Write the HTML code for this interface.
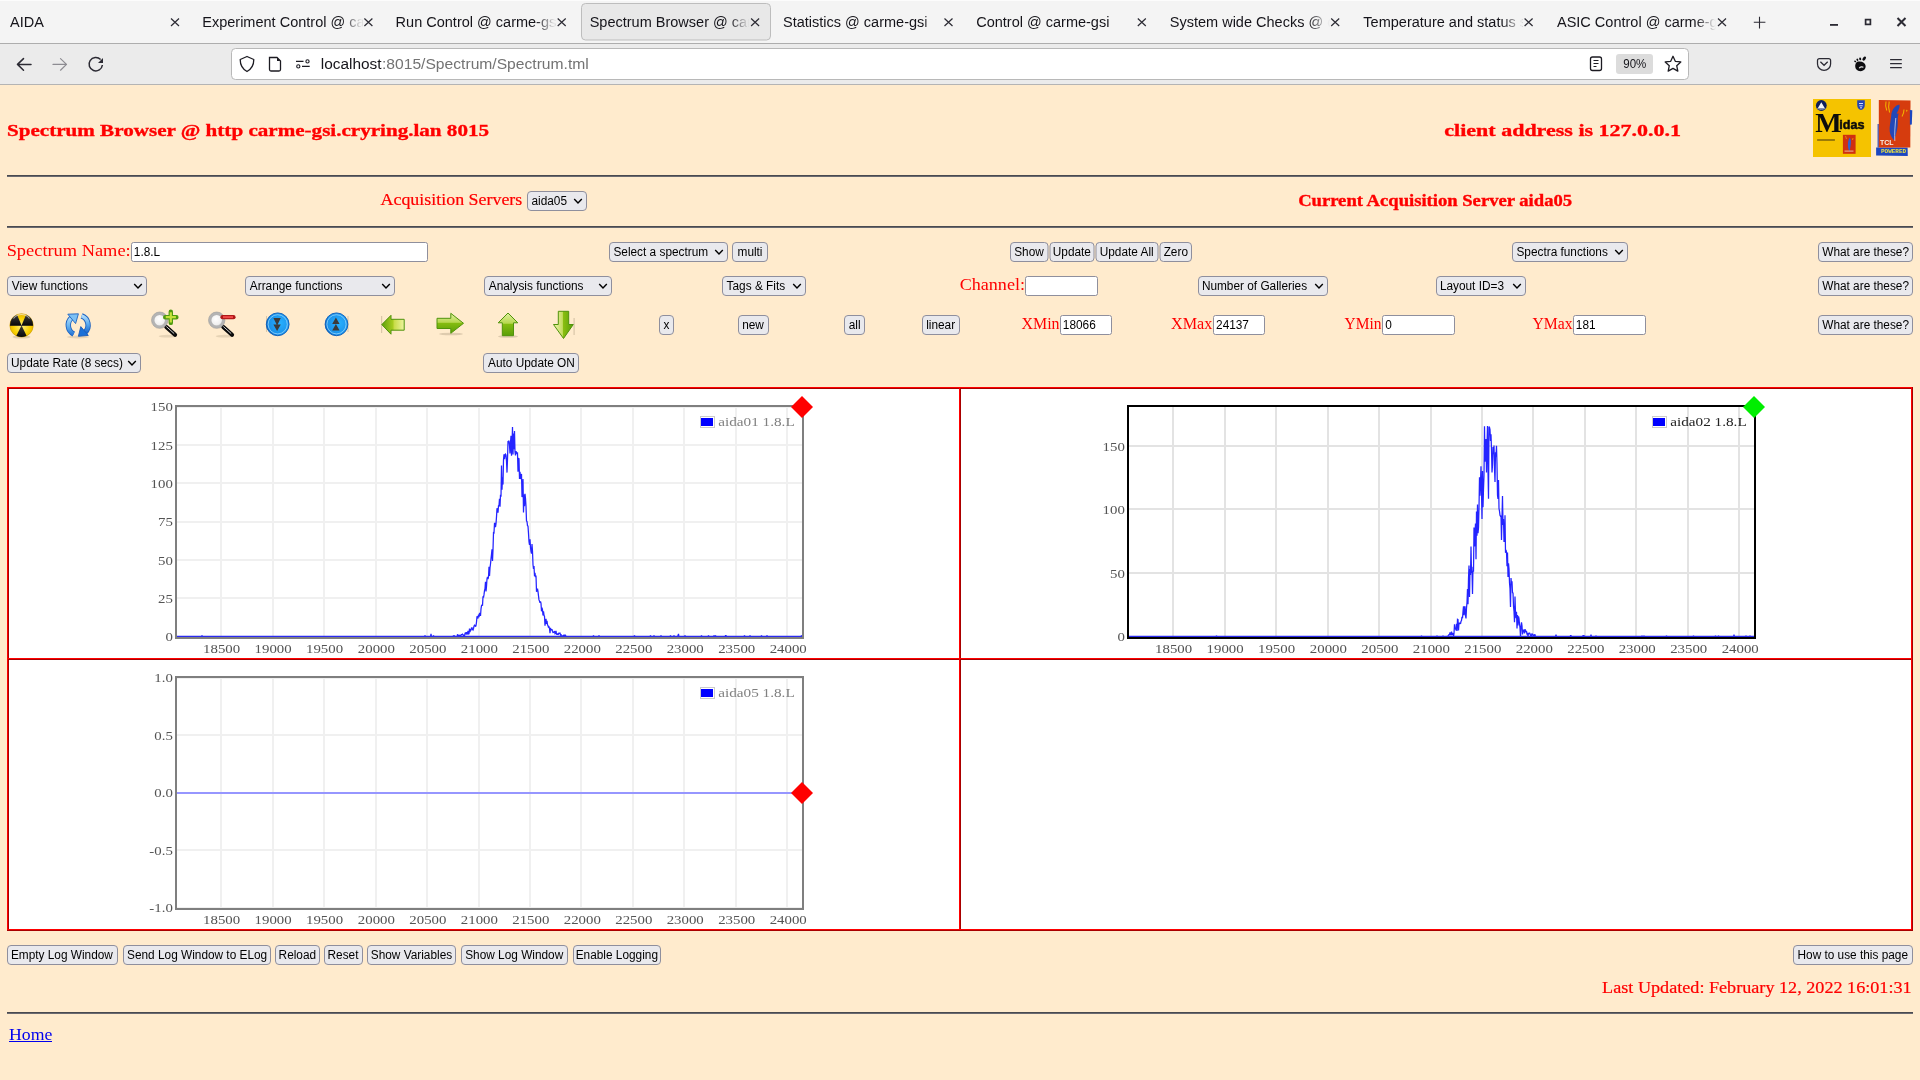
<!DOCTYPE html>
<html><head><meta charset="utf-8"><title>Spectrum Browser @ carme-gsi</title>
<style>html,body{margin:0;padding:0;width:1920px;height:1080px;overflow:hidden;background:#ffebcd;font-family:"Liberation Sans",sans-serif}</style>
</head><body>
<svg width="1920" height="1080" viewBox="0 0 1920 1080" style="position:absolute;left:0;top:0;will-change:transform">
<defs>
<radialGradient id="nukeg" cx="0.5" cy="0.55" r="0.6"><stop offset="0" stop-color="#fff080"/><stop offset="0.6" stop-color="#f8d000"/><stop offset="1" stop-color="#e0a800"/></radialGradient>
<linearGradient id="blueg" x1="0" y1="0" x2="0" y2="1"><stop offset="0" stop-color="#8fd0ff"/><stop offset="1" stop-color="#1a6fd0"/></linearGradient>
<radialGradient id="bcirc" cx="0.6" cy="0.45" r="0.6"><stop offset="0" stop-color="#28b0ff"/><stop offset="0.85" stop-color="#1a90e8"/><stop offset="1" stop-color="#0c64c0"/></radialGradient>
<linearGradient id="greeng" x1="0" y1="0" x2="0" y2="1"><stop offset="0" stop-color="#d8ee80"/><stop offset="1" stop-color="#5a9a10"/></linearGradient>
<linearGradient id="greengh" x1="0" y1="0" x2="1" y2="0"><stop offset="0" stop-color="#6aa818"/><stop offset="1" stop-color="#d0ea78"/></linearGradient>
<linearGradient id="nukeb" x1="0" y1="0" x2="0" y2="1"><stop offset="0" stop-color="#3a3a3a"/><stop offset="1" stop-color="#080808"/></linearGradient>
<linearGradient id="refl" x1="0" y1="0" x2="0" y2="1"><stop offset="0" stop-color="#a8d8fa"/><stop offset="0.5" stop-color="#68b4f0"/><stop offset="1" stop-color="#2a7ad8"/></linearGradient>
<linearGradient id="refr" x1="0" y1="0" x2="0" y2="1"><stop offset="0" stop-color="#b0dcfa"/><stop offset="0.5" stop-color="#5aaaf0"/><stop offset="1" stop-color="#1a6ad0"/></linearGradient>
<linearGradient id="gl" x1="0" y1="0" x2="1" y2="0"><stop offset="0" stop-color="#5fa00a"/><stop offset="0.5" stop-color="#a8cc20"/><stop offset="0.55" stop-color="#c8dc48"/><stop offset="1" stop-color="#eef4a0"/></linearGradient>
<linearGradient id="gv" x1="0" y1="0" x2="0" y2="1"><stop offset="0" stop-color="#e0f0a0"/><stop offset="0.45" stop-color="#b8d850"/><stop offset="0.5" stop-color="#84bc10"/><stop offset="1" stop-color="#5a9e08"/></linearGradient>
<linearGradient id="gd" x1="0" y1="0" x2="1" y2="0"><stop offset="0" stop-color="#f0f4b0"/><stop offset="0.45" stop-color="#c4dc60"/><stop offset="0.5" stop-color="#88be10"/><stop offset="1" stop-color="#5a9e08"/></linearGradient>
<radialGradient id="lens" cx="0.45" cy="0.4" r="0.6"><stop offset="0" stop-color="#ffffff"/><stop offset="0.7" stop-color="#f0f0f0"/><stop offset="1" stop-color="#d0d0d0"/></radialGradient>
<linearGradient id="fadeT" x1="0" y1="0" x2="1" y2="0"><stop offset="0" stop-color="#f4f4f4" stop-opacity="0"/><stop offset="1" stop-color="#f4f4f4" stop-opacity="1"/></linearGradient>
<linearGradient id="fadeA" x1="0" y1="0" x2="1" y2="0"><stop offset="0" stop-color="#e8e8e8" stop-opacity="0"/><stop offset="1" stop-color="#e8e8e8" stop-opacity="1"/></linearGradient>
<clipPath id="tclip0" clipPathUnits="userSpaceOnUse"><rect x="7.0" y="0" width="162.0" height="43"/></clipPath><clipPath id="tclip1" clipPathUnits="userSpaceOnUse"><rect x="200.4" y="0" width="162.0" height="43"/></clipPath><clipPath id="tclip2" clipPathUnits="userSpaceOnUse"><rect x="393.7" y="0" width="162.0" height="43"/></clipPath><clipPath id="tclip3" clipPathUnits="userSpaceOnUse"><rect x="587.1" y="0" width="162.0" height="43"/></clipPath><clipPath id="tclip4" clipPathUnits="userSpaceOnUse"><rect x="780.5" y="0" width="162.0" height="43"/></clipPath><clipPath id="tclip5" clipPathUnits="userSpaceOnUse"><rect x="973.9" y="0" width="162.0" height="43"/></clipPath><clipPath id="tclip6" clipPathUnits="userSpaceOnUse"><rect x="1167.2" y="0" width="162.0" height="43"/></clipPath><clipPath id="tclip7" clipPathUnits="userSpaceOnUse"><rect x="1360.6" y="0" width="162.0" height="43"/></clipPath><clipPath id="tclip8" clipPathUnits="userSpaceOnUse"><rect x="1554.0" y="0" width="162.0" height="43"/></clipPath></defs>
<rect x="0" y="0" width="1920" height="43" fill="#f4f4f4"/>
<rect x="0" y="0" width="1920" height="1" fill="#fcfcfc"/><rect x="0" y="43" width="1920" height="1" fill="#adadad"/>
<rect x="0" y="44" width="1920" height="40" fill="#ebebeb"/>
<rect x="0" y="84" width="1920" height="1" fill="#b4b4b4"/>
<rect x="581.5" y="3.5" width="189" height="36.5" rx="4" fill="#e8e8e8" stroke="#bdbdbd" stroke-width="1"/>
<path d="M17.5,64.4 H31 M17.5,64.4 L23.5,58.6 M17.5,64.4 L23.5,70.2" stroke="#2b2a33" stroke-width="1.5" fill="none" stroke-linecap="round"/>
<path d="M53,64.4 H66.5 M66.5,64.4 L60.5,58.6 M66.5,64.4 L60.5,70.2" stroke="#8d8c92" stroke-width="1.2" fill="none" stroke-linecap="round"/>
<path d="M102.4,65 A6.7,6.7 0 1 1 100.6,59.6" stroke="#2b2a33" stroke-width="1.5" fill="none"/><path d="M103,58 L103,63 L98,63 Z" fill="#2b2a33"/>
<rect x="231.5" y="48.5" width="1457" height="31" rx="4" fill="#ffffff" stroke="#b8b8b8" stroke-width="1"/>
<path d="M247,56.5 L253.8,59.5 C253.8,65 251.5,69 247,71.5 C242.5,69 240.2,65 240.2,59.5 Z" fill="none" stroke="#1c1b22" stroke-width="1.3" stroke-linejoin="round"/>
<path d="M269.5,57.5 H277 L280.5,61 V69.5 A1.5,1.5 0 0 1 279,71 H271 A1.5,1.5 0 0 1 269.5,69.5 Z" fill="none" stroke="#1c1b22" stroke-width="1.3"/><path d="M277,57.5 L280.5,61 H277 Z" fill="#1c1b22"/>
<path d="M296,61.4 H303.5 M302,66.4 H309.7" stroke="#1c1b22" stroke-width="1.2"/><circle cx="307.5" cy="61.4" r="1.6" fill="none" stroke="#1c1b22" stroke-width="1.1"/><circle cx="298.3" cy="66.4" r="1.6" fill="none" stroke="#1c1b22" stroke-width="1.1"/>
<rect x="1590.5" y="57" width="11" height="13.5" rx="2" fill="none" stroke="#1c1b22" stroke-width="1.3"/><path d="M1593.5,60.5 H1598.5 M1593.5,63.5 H1598.5 M1593.5,66.5 H1596.5" stroke="#1c1b22" stroke-width="1.1"/>
<rect x="1616" y="54" width="37" height="20" rx="3" fill="#dcdcdc"/>
<polygon points="1673.00,56.30 1675.29,61.34 1680.80,61.97 1676.71,65.71 1677.82,71.13 1673.00,68.40 1668.18,71.13 1669.29,65.71 1665.20,61.97 1670.71,61.34" fill="none" stroke="#1c1b22" stroke-width="1.3" stroke-linejoin="round"/>
<path d="M1819.5,58.6 H1828.6 A2,2 0 0 1 1830.6,60.6 V63.9 A6.55,6.55 0 0 1 1817.5,63.9 V60.6 A2,2 0 0 1 1819.5,58.6 Z" fill="none" stroke="#2b2a33" stroke-width="1.25"/><path d="M1820.4,61.8 L1824.05,65.3 L1827.7,61.8" fill="none" stroke="#2b2a33" stroke-width="1.25"/>
<g fill="#0c0c10"><path d="M1858.5,61.6 C1862.5,61.2 1865.2,63.2 1865.6,65.8 C1865.9,67.6 1865,69.6 1863,70.6 C1860.8,71.6 1857.8,71.2 1856.2,69.2 C1854.5,67 1854.9,62 1858.5,61.6 Z"/><ellipse cx="1855.2" cy="61.4" rx="1.1" ry="0.8" transform="rotate(35 1855.2 61.4)"/><ellipse cx="1857.4" cy="59.7" rx="1.2" ry="0.9" transform="rotate(60 1857.4 59.7)"/><ellipse cx="1860.2" cy="58.9" rx="1.4" ry="1.0" transform="rotate(75 1860.2 58.9)"/><ellipse cx="1864.2" cy="58.6" rx="2.3" ry="1.4" transform="rotate(-50 1864.2 58.6)"/></g><path d="M1859.3,68.3 C1860.2,66.6 1862.4,66.4 1863.4,67.4" fill="none" stroke="#ebebeb" stroke-width="1.3"/>
<path d="M1890.1,59.6 H1901.8 M1890.1,63.6 H1901.8 M1890.1,67.6 H1901.8" stroke="#2b2a33" stroke-width="1.3"/>
<rect x="0" y="85" width="1920" height="995" fill="#ffebcd"/>
<rect x="7" y="175" width="1906" height="1" fill="#4a4a4f"/><rect x="7" y="176" width="1906" height="1" fill="#6a6a70"/>
<rect x="7" y="226" width="1906" height="1" fill="#4a4a4f"/><rect x="7" y="227" width="1906" height="1" fill="#6a6a70"/>
<rect x="7" y="1012" width="1906" height="1" fill="#4a4a4f"/><rect x="7" y="1013" width="1906" height="1" fill="#6a6a70"/>
<rect x="9" y="1041" width="43" height="1" fill="#0000ee"/>
<rect x="1813" y="99" width="58" height="58" fill="#f5c300"/>
<circle cx="1821.3" cy="105.5" r="5.4" fill="#0e1e5c"/><path d="M1817.6,108.4 L1821.3,102.3 L1825,108.4 Z" fill="#f4f4f4"/><path d="M1817.2,108.6 Q1821.3,110.6 1825.4,108.6" stroke="#9aa8c0" stroke-width="0.8" fill="none"/>
<path d="M1857.2,100.2 H1864.8 V105 C1864.8,107.8 1863,109.6 1861,110 C1859,109.6 1857.2,107.8 1857.2,105 Z" fill="#2444b4"/><path d="M1859,103.5 H1863 M1859.3,105.8 H1862.7 M1860,107.8 H1862" stroke="#e8ecff" stroke-width="0.9"/>
<text transform="translate(1815.2,131.9) scale(1.02,1)" font-family="'Liberation Serif'" font-weight="bold" font-size="27.5" fill="#0c0c0c">M</text>
<text transform="translate(1839.2,128.9) scale(1.0,1)" font-family="'Liberation Sans'" font-weight="bold" font-size="12.6" fill="#0c0c0c" stroke="#0c0c0c" stroke-width="0.5">idas</text>
<rect x="1817.1" y="139.2" width="17.8" height="1.6" fill="#2a2010" opacity="0.55"/>
<rect x="1842.9" y="134.8" width="12.7" height="19" fill="#d03010"/><path d="M1849.8,137.5 C1848,139.5 1847.5,144 1848.2,148 C1848.6,150 1849.3,151 1849.5,151.5 C1850.3,148 1851.3,143 1850.8,140 Z" fill="#3060d0"/><rect x="1844.5" y="150.5" width="9" height="1.2" fill="#f0c0a0" opacity="0.8"/><path d="M1845.5,136 L1846.5,139 M1853,138 L1852.5,140" stroke="#e8b000" stroke-width="0.7"/>
<path d="M1877.6,124 L1878.8,124 L1878.8,147.6 L1877.6,147.6 Z" fill="#1b46c0"/>
<path d="M1876.1,147.6 L1907.6,147.6 L1907.8,156 L1876.1,155.4 Z" fill="#1b46c0"/>
<path d="M1878.8,100.1 L1910.5,100.6 L1910.3,147.6 L1878.8,147.6 Z" fill="#d63c0e"/>
<path d="M1909.9,110 L1912.3,110.3 L1911.8,124.4 L1909.9,124.8 Z" fill="#1b46c0"/>
<path d="M1899.5,104.6 C1895.5,105.2 1891.6,109.5 1891.2,116 C1890.8,121 1889.2,126.5 1889.7,131.5 C1890.2,135.5 1892.8,139 1894.4,140.6 C1895.2,136 1897.2,131 1897.6,126 C1898,121.5 1897.2,118.2 1898.6,113.4 L1896.6,113.8 C1898.2,110.5 1900.2,107.5 1899.5,104.6 Z" fill="#2248b8"/>
<path d="M1895.8,118 C1895,126 1894.4,134 1894.8,141" stroke="#e8e8f0" stroke-width="0.7" fill="none"/>
<path d="M1886,101.5 C1885.3,104.5 1885.6,107.5 1886.8,110.5 M1889.2,101.5 C1888.3,105 1888.6,109 1889.6,112.5" stroke="#f0b000" stroke-width="1.1" fill="none"/>
<path d="M1904,109.5 C1904,112 1903.2,114.5 1902,116.5 M1907,109.8 L1906.5,111.5" stroke="#f0b000" stroke-width="1.1" fill="none"/>
<text transform="translate(1880,145.3) scale(1.05,1)" font-family="'Liberation Sans'" font-weight="bold" font-size="6.6" fill="#f8f0e8">TCL</text>
<text x="1881" y="153.3" font-family="'Liberation Mono'" font-weight="bold" font-size="6" fill="#e8e040" textLength="25.1" lengthAdjust="spacingAndGlyphs">POWERED</text>
<rect x="527.5" y="191.5" width="59.0" height="19" rx="3.5" fill="#e9e9ed" stroke="#8f8f9d" stroke-width="1"/>
<path d="M574.2,199.0 L578.0,203.0 L581.8,199.0" fill="none" stroke="#000" stroke-width="1.4"/>
<rect x="131.5" y="242.5" width="296.0" height="19" rx="2" fill="#ffffff" stroke="#8f8f9d" stroke-width="1"/>
<rect x="609.5" y="242.5" width="118.0" height="19" rx="3.5" fill="#e9e9ed" stroke="#8f8f9d" stroke-width="1"/>
<path d="M715.2,250.0 L719.0,254.0 L722.8,250.0" fill="none" stroke="#000" stroke-width="1.4"/>
<rect x="732.5" y="242.5" width="35.0" height="19" rx="3.5" fill="#e9e9ed" stroke="#8f8f9d" stroke-width="1"/>
<rect x="1010.5" y="242.5" width="37.5" height="19" rx="3.5" fill="#e9e9ed" stroke="#8f8f9d" stroke-width="1"/>
<rect x="1050.0" y="242.5" width="44.0" height="19" rx="3.5" fill="#e9e9ed" stroke="#8f8f9d" stroke-width="1"/>
<rect x="1096.0" y="242.5" width="62.0" height="19" rx="3.5" fill="#e9e9ed" stroke="#8f8f9d" stroke-width="1"/>
<rect x="1160.0" y="242.5" width="31.5" height="19" rx="3.5" fill="#e9e9ed" stroke="#8f8f9d" stroke-width="1"/>
<rect x="1512.5" y="242.5" width="115.0" height="19" rx="3.5" fill="#e9e9ed" stroke="#8f8f9d" stroke-width="1"/>
<path d="M1615.2,250.0 L1619.0,254.0 L1622.8,250.0" fill="none" stroke="#000" stroke-width="1.4"/>
<rect x="1818.5" y="242.5" width="94.0" height="19" rx="3.5" fill="#e9e9ed" stroke="#8f8f9d" stroke-width="1"/>
<rect x="7.5" y="276.5" width="139.0" height="19" rx="3.5" fill="#e9e9ed" stroke="#8f8f9d" stroke-width="1"/>
<path d="M134.2,284.0 L138.0,288.0 L141.8,284.0" fill="none" stroke="#000" stroke-width="1.4"/>
<rect x="245.5" y="276.5" width="149.0" height="19" rx="3.5" fill="#e9e9ed" stroke="#8f8f9d" stroke-width="1"/>
<path d="M382.2,284.0 L386.0,288.0 L389.8,284.0" fill="none" stroke="#000" stroke-width="1.4"/>
<rect x="484.5" y="276.5" width="127.0" height="19" rx="3.5" fill="#e9e9ed" stroke="#8f8f9d" stroke-width="1"/>
<path d="M599.2,284.0 L603.0,288.0 L606.8,284.0" fill="none" stroke="#000" stroke-width="1.4"/>
<rect x="722.5" y="276.5" width="83.0" height="19" rx="3.5" fill="#e9e9ed" stroke="#8f8f9d" stroke-width="1"/>
<path d="M793.2,284.0 L797.0,288.0 L800.8,284.0" fill="none" stroke="#000" stroke-width="1.4"/>
<rect x="1025.5" y="276.5" width="72.0" height="19" rx="2" fill="#ffffff" stroke="#8f8f9d" stroke-width="1"/>
<rect x="1198.5" y="276.5" width="129.0" height="19" rx="3.5" fill="#e9e9ed" stroke="#8f8f9d" stroke-width="1"/>
<path d="M1315.2,284.0 L1319.0,288.0 L1322.8,284.0" fill="none" stroke="#000" stroke-width="1.4"/>
<rect x="1436.5" y="276.5" width="89.0" height="19" rx="3.5" fill="#e9e9ed" stroke="#8f8f9d" stroke-width="1"/>
<path d="M1513.2,284.0 L1517.0,288.0 L1520.8,284.0" fill="none" stroke="#000" stroke-width="1.4"/>
<rect x="1818.5" y="276.5" width="94.0" height="19" rx="3.5" fill="#e9e9ed" stroke="#8f8f9d" stroke-width="1"/>
<rect x="659.5" y="315.5" width="14.0" height="19" rx="3.5" fill="#e9e9ed" stroke="#8f8f9d" stroke-width="1"/>
<rect x="738.5" y="315.5" width="30.0" height="19" rx="3.5" fill="#e9e9ed" stroke="#8f8f9d" stroke-width="1"/>
<rect x="844.5" y="315.5" width="20.0" height="19" rx="3.5" fill="#e9e9ed" stroke="#8f8f9d" stroke-width="1"/>
<rect x="922.5" y="315.5" width="37.0" height="19" rx="3.5" fill="#e9e9ed" stroke="#8f8f9d" stroke-width="1"/>
<rect x="1060.5" y="315.5" width="51.0" height="19" rx="2" fill="#ffffff" stroke="#8f8f9d" stroke-width="1"/>
<rect x="1213.5" y="315.5" width="51.0" height="19" rx="2" fill="#ffffff" stroke="#8f8f9d" stroke-width="1"/>
<rect x="1382.5" y="315.5" width="72.0" height="19" rx="2" fill="#ffffff" stroke="#8f8f9d" stroke-width="1"/>
<rect x="1573.5" y="315.5" width="72.0" height="19" rx="2" fill="#ffffff" stroke="#8f8f9d" stroke-width="1"/>
<rect x="1818.5" y="315.5" width="94.0" height="19" rx="3.5" fill="#e9e9ed" stroke="#8f8f9d" stroke-width="1"/>
<rect x="7.5" y="353.5" width="133.0" height="19" rx="3.5" fill="#e9e9ed" stroke="#8f8f9d" stroke-width="1"/>
<path d="M128.2,361.0 L132.0,365.0 L135.8,361.0" fill="none" stroke="#000" stroke-width="1.4"/>
<rect x="483.5" y="353.5" width="95.0" height="19" rx="3.5" fill="#e9e9ed" stroke="#8f8f9d" stroke-width="1"/>
<rect x="7.5" y="945.5" width="110.0" height="19" rx="3.5" fill="#e9e9ed" stroke="#8f8f9d" stroke-width="1"/>
<rect x="123.5" y="945.5" width="147.0" height="19" rx="3.5" fill="#e9e9ed" stroke="#8f8f9d" stroke-width="1"/>
<rect x="275.5" y="945.5" width="44.0" height="19" rx="3.5" fill="#e9e9ed" stroke="#8f8f9d" stroke-width="1"/>
<rect x="324.5" y="945.5" width="38.0" height="19" rx="3.5" fill="#e9e9ed" stroke="#8f8f9d" stroke-width="1"/>
<rect x="367.5" y="945.5" width="88.0" height="19" rx="3.5" fill="#e9e9ed" stroke="#8f8f9d" stroke-width="1"/>
<rect x="461.5" y="945.5" width="106.0" height="19" rx="3.5" fill="#e9e9ed" stroke="#8f8f9d" stroke-width="1"/>
<rect x="573.5" y="945.5" width="87.0" height="19" rx="3.5" fill="#e9e9ed" stroke="#8f8f9d" stroke-width="1"/>
<rect x="1793.5" y="945.5" width="119.0" height="19" rx="3.5" fill="#e9e9ed" stroke="#8f8f9d" stroke-width="1"/>
<ellipse cx="21.5" cy="337" rx="9" ry="1.6" fill="#5a4a30" opacity="0.18"/>
<circle cx="21.55" cy="325.4" r="11.7" fill="url(#nukeg)" stroke="#c89a00" stroke-width="0.6"/>
<path d="M21.55,325.4 L10.05,325.40 A11.5,11.5 0 0 1 17.06,314.81 Z" fill="url(#nukeb)"/>
<path d="M21.55,325.4 L26.04,314.81 A11.5,11.5 0 0 1 33.05,325.40 Z" fill="url(#nukeb)"/>
<path d="M21.55,325.4 L26.59,335.74 A11.5,11.5 0 0 1 16.33,335.65 Z" fill="url(#nukeb)"/>
<rect x="10" y="325" width="23" height="0.8" fill="#0a0a20" opacity="0.7"/>
<path d="M13.5,318.5 A10,10 0 0 1 29.5,318.5" fill="none" stroke="#ffffff" stroke-width="1.2" opacity="0.55"/>
<ellipse cx="78" cy="337" rx="11" ry="1.5" fill="#5a4a30" opacity="0.15"/>
<path d="M73.71,334.02 A9.9,9.9 0 0 1 71.58,317.84" fill="none" stroke="#1d62c0" stroke-width="5.4"/>
<path d="M73.71,334.02 A9.9,9.9 0 0 1 71.58,317.84" fill="none" stroke="url(#refl)" stroke-width="3.6"/>
<path d="M67.8,314.2 L78.4,313.8 L75.6,323.6 Z" fill="#7cc0f4" stroke="#1d62c0" stroke-width="0.9" stroke-linejoin="round"/>
<path d="M81.59,315.90 A9.9,9.9 0 0 1 84.95,332.44" fill="none" stroke="#1d62c0" stroke-width="5.4"/>
<path d="M81.59,315.90 A9.9,9.9 0 0 1 84.95,332.44" fill="none" stroke="url(#refr)" stroke-width="3.6"/>
<path d="M80.8,326.6 L78.4,336.3 L88.3,335.4 Z" fill="#1a70d8" stroke="#1d5cb8" stroke-width="0.9" stroke-linejoin="round"/>
<ellipse cx="167.7" cy="336.2" rx="9" ry="1.4" fill="#5a4a30" opacity="0.15"/><path d="M166.3,327.0 L175.0,334.8" stroke="#0a0a0a" stroke-width="4.2" stroke-linecap="round"/><path d="M166.3,326.5 L174.2,333.6" stroke="#e8e8e8" stroke-width="0.9"/><circle cx="159.7" cy="320.2" r="6.7" fill="url(#lens)" stroke="#b4b4b4" stroke-width="2.9"/><circle cx="159.7" cy="320.2" r="8.2" fill="none" stroke="#9a9a9a" stroke-width="0.6"/>
<path d="M170.8,311.8 V322.9 M165.2,317.2 H176.4" stroke="#4e9a0e" stroke-width="4.4" stroke-linecap="round"/>
<path d="M170.8,312.3 V322.4 M165.7,317.2 H175.9" stroke="#c4e03c" stroke-width="2.2"/>
<ellipse cx="224.7" cy="336.2" rx="9" ry="1.4" fill="#5a4a30" opacity="0.15"/><path d="M223.3,327.0 L232.0,334.8" stroke="#0a0a0a" stroke-width="4.2" stroke-linecap="round"/><path d="M223.3,326.5 L231.2,333.6" stroke="#e8e8e8" stroke-width="0.9"/><circle cx="216.7" cy="320.2" r="6.7" fill="url(#lens)" stroke="#b4b4b4" stroke-width="2.9"/><circle cx="216.7" cy="320.2" r="8.2" fill="none" stroke="#9a9a9a" stroke-width="0.6"/>
<path d="M222.5,317.2 H233.5" stroke="#b01818" stroke-width="4.2" stroke-linecap="round"/><path d="M223,317.1 H233" stroke="#f04848" stroke-width="2"/>
<rect x="266" y="316" width="1" height="16" fill="#6a5a40" opacity="0.25"/><rect x="347.5" y="316" width="1" height="16" fill="#6a5a40" opacity="0.25"/>
<circle cx="277.7" cy="324.3" r="11.4" fill="url(#bcirc)" stroke="#0c5cb8" stroke-width="0.9"/><circle cx="277.7" cy="324.3" r="9.6" fill="none" stroke="#a8e0ff" stroke-width="0.9" opacity="0.75"/><path d="M273.4,318.1 L277.09999999999997,325.5 L280.79999999999995,318.1 Z M273.4,324.6 L277.09999999999997,331.1 L280.79999999999995,324.6 Z" fill="#3c3a3a"/>
<circle cx="336.5" cy="324.3" r="11.4" fill="url(#bcirc)" stroke="#0c5cb8" stroke-width="0.9"/><circle cx="336.5" cy="324.3" r="9.6" fill="none" stroke="#a8e0ff" stroke-width="0.9" opacity="0.75"/><path d="M332.2,324.1 L335.9,317.5 L339.59999999999997,324.1 Z M332.2,330.6 L335.9,324.0 L339.59999999999997,330.6 Z" fill="#3c3a3a"/>
<rect x="381" y="316" width="1.2" height="17" fill="#6a5a40" opacity="0.25"/><rect x="573.5" y="318" width="1.2" height="17" fill="#6a5a40" opacity="0.25"/>
<ellipse cx="451" cy="334" rx="12" ry="1.3" fill="#5a4a30" opacity="0.2"/><ellipse cx="508" cy="336.5" rx="10" ry="1.3" fill="#5a4a30" opacity="0.2"/>
<path d="M381.8,324.6 L391,315.3 V319.3 H404.2 V330.2 H391 V334.2 Z" fill="url(#gl)" stroke="#4f930c" stroke-width="1" stroke-linejoin="round"/>
<path d="M463.5,323.3 L450.8,313.3 V318.3 H437 V328.5 H450.8 V333.3 Z" fill="url(#gv)" stroke="#4f930c" stroke-width="1" stroke-linejoin="round"/>
<path d="M508,313 L517.8,322.8 H513.5 V335.7 H502.3 V322.8 H498.2 Z" fill="url(#gv)" stroke="#4f930c" stroke-width="1" stroke-linejoin="round"/>
<path d="M563.5,338.5 L573.3,324.5 H568.7 V311.3 H558.3 V324.5 H553.5 Z" fill="url(#gd)" stroke="#4f930c" stroke-width="1" stroke-linejoin="round"/>
<rect x="7" y="387" width="1906" height="544" fill="#ffffff"/>
<rect x="7" y="387" width="1906" height="1" fill="#ff0000"/>
<rect x="7" y="387" width="1" height="544" fill="#ff0000"/>
<rect x="7" y="930" width="1906" height="1" fill="#a80000"/>
<rect x="1912" y="387" width="1" height="544" fill="#a80000"/>
<rect x="8" y="388" width="952" height="1" fill="#a80000"/>
<rect x="8" y="388" width="1" height="271" fill="#a80000"/>
<rect x="8" y="658" width="952" height="1" fill="#ff0000"/>
<rect x="959" y="388" width="1" height="271" fill="#ff0000"/>
<rect x="960" y="388" width="952" height="1" fill="#a80000"/>
<rect x="960" y="388" width="1" height="271" fill="#a80000"/>
<rect x="960" y="658" width="952" height="1" fill="#ff0000"/>
<rect x="1911" y="388" width="1" height="271" fill="#ff0000"/>
<rect x="8" y="659" width="952" height="1" fill="#a80000"/>
<rect x="8" y="659" width="1" height="271" fill="#a80000"/>
<rect x="8" y="929" width="952" height="1" fill="#ff0000"/>
<rect x="959" y="659" width="1" height="271" fill="#ff0000"/>
<rect x="960" y="659" width="952" height="1" fill="#a80000"/>
<rect x="960" y="659" width="1" height="271" fill="#a80000"/>
<rect x="960" y="929" width="952" height="1" fill="#ff0000"/>
<rect x="1911" y="659" width="1" height="271" fill="#ff0000"/>
<path d="M221,407 V637 M273,407 V637 M324,407 V637 M376,407 V637 M427,407 V637 M479,407 V637 M530,407 V637 M581,407 V637 M633,407 V637 M684,407 V637 M736,407 V637 M787,407 V637 M177,637 H802 M177,598 H802 M177,560 H802 M177,522 H802 M177,483 H802 M177,445 H802 M177,407 H802" stroke="#f0f0f0" stroke-width="2" fill="none"/>
<polyline points="177.00,637.0 177.50,637.0 178.00,637.0 178.50,637.0 179.00,637.0 179.50,637.0 180.00,637.0 180.50,637.0 181.00,637.0 181.50,637.0 182.00,637.0 182.50,637.0 183.00,637.0 183.50,637.0 184.00,637.0 184.50,637.0 185.00,637.0 185.50,637.0 186.00,637.0 186.50,637.0 187.00,637.0 187.50,637.0 188.00,637.0 188.50,637.0 189.00,637.0 189.50,637.0 190.00,637.0 190.50,637.0 191.00,637.0 191.50,637.0 192.00,637.0 192.50,637.0 193.00,637.0 193.50,637.0 194.00,637.0 194.50,637.0 195.00,637.0 195.50,637.0 196.00,637.0 196.50,637.0 197.00,637.0 197.50,637.0 198.00,637.0 198.50,637.0 199.00,637.0 199.50,637.0 200.00,637.0 200.50,637.0 201.00,637.0 201.50,637.0 202.00,635.5 202.50,637.0 203.00,637.0 203.50,637.0 204.00,637.0 204.50,637.0 205.00,637.0 205.50,637.0 206.00,637.0 206.50,637.0 207.00,637.0 207.50,637.0 208.00,637.0 208.50,637.0 209.00,637.0 209.50,637.0 210.00,637.0 210.50,637.0 211.00,637.0 211.50,637.0 212.00,637.0 212.50,637.0 213.00,637.0 213.50,637.0 214.00,637.0 214.50,637.0 215.00,637.0 215.50,637.0 216.00,637.0 216.50,637.0 217.00,637.0 217.50,637.0 218.00,637.0 218.50,637.0 219.00,637.0 219.50,637.0 220.00,637.0 220.50,637.0 221.00,637.0 221.50,637.0 222.00,637.0 222.50,637.0 223.00,637.0 223.50,637.0 224.00,637.0 224.50,637.0 225.00,637.0 225.50,637.0 226.00,637.0 226.50,637.0 227.00,637.0 227.50,637.0 228.00,637.0 228.50,637.0 229.00,637.0 229.50,637.0 230.00,637.0 230.50,637.0 231.00,637.0 231.50,637.0 232.00,637.0 232.50,637.0 233.00,637.0 233.50,637.0 234.00,637.0 234.50,637.0 235.00,637.0 235.50,637.0 236.00,637.0 236.50,637.0 237.00,637.0 237.50,637.0 238.00,637.0 238.50,637.0 239.00,637.0 239.50,637.0 240.00,637.0 240.50,637.0 241.00,637.0 241.50,637.0 242.00,637.0 242.50,637.0 243.00,637.0 243.50,637.0 244.00,637.0 244.50,637.0 245.00,637.0 245.50,637.0 246.00,637.0 246.50,637.0 247.00,637.0 247.50,637.0 248.00,637.0 248.50,637.0 249.00,637.0 249.50,637.0 250.00,637.0 250.50,637.0 251.00,637.0 251.50,637.0 252.00,637.0 252.50,637.0 253.00,637.0 253.50,637.0 254.00,637.0 254.50,637.0 255.00,637.0 255.50,637.0 256.00,637.0 256.50,637.0 257.00,637.0 257.50,637.0 258.00,637.0 258.50,637.0 259.00,637.0 259.50,637.0 260.00,637.0 260.50,637.0 261.00,637.0 261.50,637.0 262.00,637.0 262.50,637.0 263.00,637.0 263.50,637.0 264.00,637.0 264.50,637.0 265.00,637.0 265.50,637.0 266.00,637.0 266.50,637.0 267.00,637.0 267.50,637.0 268.00,637.0 268.50,637.0 269.00,637.0 269.50,637.0 270.00,637.0 270.50,637.0 271.00,637.0 271.50,637.0 272.00,637.0 272.50,637.0 273.00,637.0 273.50,637.0 274.00,637.0 274.50,637.0 275.00,637.0 275.50,637.0 276.00,637.0 276.50,637.0 277.00,637.0 277.50,637.0 278.00,637.0 278.50,637.0 279.00,637.0 279.50,637.0 280.00,637.0 280.50,637.0 281.00,637.0 281.50,637.0 282.00,637.0 282.50,637.0 283.00,637.0 283.50,637.0 284.00,637.0 284.50,637.0 285.00,637.0 285.50,637.0 286.00,637.0 286.50,637.0 287.00,637.0 287.50,637.0 288.00,637.0 288.50,637.0 289.00,637.0 289.50,637.0 290.00,637.0 290.50,637.0 291.00,637.0 291.50,637.0 292.00,637.0 292.50,637.0 293.00,637.0 293.50,637.0 294.00,637.0 294.50,637.0 295.00,637.0 295.50,637.0 296.00,637.0 296.50,637.0 297.00,637.0 297.50,637.0 298.00,637.0 298.50,637.0 299.00,637.0 299.50,637.0 300.00,637.0 300.50,637.0 301.00,637.0 301.50,637.0 302.00,637.0 302.50,637.0 303.00,637.0 303.50,637.0 304.00,637.0 304.50,637.0 305.00,637.0 305.50,637.0 306.00,637.0 306.50,637.0 307.00,637.0 307.50,637.0 308.00,637.0 308.50,637.0 309.00,637.0 309.50,637.0 310.00,637.0 310.50,637.0 311.00,637.0 311.50,637.0 312.00,637.0 312.50,637.0 313.00,637.0 313.50,637.0 314.00,637.0 314.50,637.0 315.00,637.0 315.50,637.0 316.00,637.0 316.50,637.0 317.00,637.0 317.50,637.0 318.00,637.0 318.50,637.0 319.00,637.0 319.50,637.0 320.00,637.0 320.50,637.0 321.00,637.0 321.50,637.0 322.00,637.0 322.50,637.0 323.00,637.0 323.50,637.0 324.00,637.0 324.50,637.0 325.00,637.0 325.50,637.0 326.00,637.0 326.50,637.0 327.00,637.0 327.50,637.0 328.00,637.0 328.50,637.0 329.00,637.0 329.50,637.0 330.00,637.0 330.50,637.0 331.00,637.0 331.50,637.0 332.00,637.0 332.50,637.0 333.00,637.0 333.50,637.0 334.00,637.0 334.50,637.0 335.00,637.0 335.50,637.0 336.00,637.0 336.50,637.0 337.00,637.0 337.50,637.0 338.00,637.0 338.50,637.0 339.00,637.0 339.50,637.0 340.00,637.0 340.50,637.0 341.00,637.0 341.50,637.0 342.00,637.0 342.50,637.0 343.00,637.0 343.50,637.0 344.00,637.0 344.50,637.0 345.00,637.0 345.50,637.0 346.00,637.0 346.50,637.0 347.00,637.0 347.50,637.0 348.00,637.0 348.50,637.0 349.00,637.0 349.50,637.0 350.00,637.0 350.50,637.0 351.00,637.0 351.50,637.0 352.00,637.0 352.50,637.0 353.00,637.0 353.50,637.0 354.00,637.0 354.50,637.0 355.00,637.0 355.50,637.0 356.00,637.0 356.50,637.0 357.00,637.0 357.50,637.0 358.00,637.0 358.50,637.0 359.00,637.0 359.50,637.0 360.00,637.0 360.50,637.0 361.00,637.0 361.50,637.0 362.00,637.0 362.50,637.0 363.00,637.0 363.50,637.0 364.00,637.0 364.50,637.0 365.00,637.0 365.50,637.0 366.00,637.0 366.50,637.0 367.00,637.0 367.50,637.0 368.00,637.0 368.50,637.0 369.00,637.0 369.50,637.0 370.00,637.0 370.50,637.0 371.00,637.0 371.50,637.0 372.00,637.0 372.50,637.0 373.00,637.0 373.50,637.0 374.00,637.0 374.50,637.0 375.00,637.0 375.50,637.0 376.00,637.0 376.50,637.0 377.00,637.0 377.50,637.0 378.00,637.0 378.50,637.0 379.00,637.0 379.50,637.0 380.00,637.0 380.50,637.0 381.00,637.0 381.50,637.0 382.00,637.0 382.50,637.0 383.00,637.0 383.50,637.0 384.00,637.0 384.50,637.0 385.00,637.0 385.50,637.0 386.00,637.0 386.50,637.0 387.00,637.0 387.50,637.0 388.00,637.0 388.50,637.0 389.00,637.0 389.50,637.0 390.00,637.0 390.50,637.0 391.00,637.0 391.50,637.0 392.00,637.0 392.50,637.0 393.00,637.0 393.50,637.0 394.00,637.0 394.50,637.0 395.00,637.0 395.50,637.0 396.00,637.0 396.50,637.0 397.00,637.0 397.50,637.0 398.00,637.0 398.50,637.0 399.00,637.0 399.50,637.0 400.00,637.0 400.50,637.0 401.00,637.0 401.50,637.0 402.00,637.0 402.50,637.0 403.00,637.0 403.50,637.0 404.00,637.0 404.50,637.0 405.00,637.0 405.50,637.0 406.00,637.0 406.50,637.0 407.00,637.0 407.50,637.0 408.00,637.0 408.50,637.0 409.00,637.0 409.50,637.0 410.00,637.0 410.50,637.0 411.00,637.0 411.50,637.0 412.00,637.0 412.50,637.0 413.00,637.0 413.50,637.0 414.00,637.0 414.50,637.0 415.00,637.0 415.50,637.0 416.00,637.0 416.50,637.0 417.00,637.0 417.50,637.0 418.00,637.0 418.50,637.0 419.00,637.0 419.50,637.0 420.00,637.0 420.50,637.0 421.00,637.0 421.50,637.0 422.00,637.0 422.50,637.0 423.00,637.0 423.50,637.0 424.00,637.0 424.50,637.0 425.00,635.5 425.50,637.0 426.00,637.0 426.50,637.0 427.00,637.0 427.50,637.0 428.00,637.0 428.50,637.0 429.00,637.0 429.50,637.0 430.00,637.0 430.50,637.0 431.00,633.9 431.50,637.0 432.00,637.0 432.50,637.0 433.00,637.0 433.50,635.5 434.00,637.0 434.50,637.0 435.00,637.0 435.50,637.0 436.00,637.0 436.50,637.0 437.00,637.0 437.50,637.0 438.00,637.0 438.50,637.0 439.00,637.0 439.50,637.0 440.00,637.0 440.50,637.0 441.00,637.0 441.50,637.0 442.00,637.0 442.50,637.0 443.00,637.0 443.50,637.0 444.00,637.0 444.50,637.0 445.00,637.0 445.50,637.0 446.00,637.0 446.50,637.0 447.00,637.0 447.50,637.0 448.00,637.0 448.50,637.0 449.00,637.0 449.50,637.0 450.00,637.0 450.50,637.0 451.00,637.0 451.50,637.0 452.00,637.0 452.50,637.0 453.00,637.0 453.50,635.5 454.00,637.0 454.50,635.5 455.00,637.0 455.50,637.0 456.00,637.0 456.50,637.0 457.00,637.0 457.50,634.4 458.00,635.4 458.50,635.4 459.00,636.3 459.50,635.8 460.00,634.9 460.50,637.0 461.00,635.1 461.50,634.6 462.00,634.6 462.50,634.2 463.00,634.7 463.50,635.4 464.00,635.6 464.50,636.0 465.00,633.5 465.50,632.5 466.00,634.4 466.50,632.1 467.00,634.6 467.50,633.3 468.00,630.8 468.50,633.9 469.00,633.7 469.50,628.5 470.00,632.0 470.50,629.6 471.00,629.8 471.50,628.0 472.00,627.8 472.50,629.5 473.00,630.0 473.50,628.5 474.00,626.2 474.50,625.2 475.00,625.5 475.50,626.6 476.00,625.6 476.50,622.1 477.00,616.2 477.50,617.3 478.00,618.5 478.50,614.5 479.00,617.1 479.50,613.4 480.00,613.6 480.50,615.9 481.00,609.0 481.50,605.6 482.00,604.7 482.50,605.8 483.00,596.4 483.50,597.6 484.00,594.7 484.50,590.7 485.00,588.6 485.50,581.8 486.00,591.4 486.50,586.5 487.00,578.8 487.50,576.9 488.00,579.0 488.50,577.0 489.00,566.9 489.50,576.0 490.00,567.9 490.50,564.0 491.00,558.9 491.50,554.3 492.00,549.4 492.50,560.9 493.00,549.8 493.50,532.7 494.00,532.9 494.50,523.3 495.00,523.3 495.50,527.1 496.00,523.6 496.50,516.9 497.00,508.4 497.50,508.8 498.00,512.7 498.50,505.8 499.00,505.6 499.50,498.7 500.00,506.8 500.50,494.7 501.00,496.7 501.50,465.5 502.00,489.7 502.50,477.3 503.00,484.6 503.50,459.7 504.00,454.2 504.50,459.3 505.00,454.6 505.50,454.1 506.00,455.2 506.50,461.1 507.00,472.6 507.50,459.5 508.00,441.5 508.50,441.3 509.00,440.8 509.50,445.5 510.00,453.5 510.50,442.5 511.00,435.7 511.50,455.8 512.00,445.7 512.50,426.9 513.00,454.6 513.50,433.6 514.00,449.2 514.50,431.0 515.00,451.9 515.50,455.4 516.00,451.1 516.50,452.4 517.00,453.4 517.50,453.2 518.00,471.8 518.50,458.1 519.00,458.8 519.50,479.0 520.00,471.8 520.50,478.2 521.00,478.9 521.50,473.9 522.00,497.1 522.50,488.8 523.00,479.1 523.50,512.5 524.00,494.6 524.50,506.1 525.00,493.9 525.50,498.5 526.00,506.3 526.50,520.9 527.00,521.5 527.50,525.6 528.00,526.1 528.50,533.5 529.00,541.7 529.50,545.0 530.00,539.3 530.50,547.5 531.00,551.3 531.50,553.5 532.00,544.1 532.50,551.3 533.00,564.8 533.50,568.8 534.00,566.0 534.50,576.3 535.00,572.7 535.50,577.3 536.00,575.5 536.50,591.8 537.00,590.6 537.50,588.5 538.00,591.7 538.50,595.9 539.00,599.9 539.50,601.1 540.00,602.8 540.50,601.3 541.00,603.4 541.50,611.3 542.00,607.7 542.50,609.8 543.00,615.4 543.50,611.3 544.00,615.4 544.50,616.1 545.00,625.6 545.50,620.7 546.00,618.8 546.50,623.9 547.00,620.9 547.50,624.8 548.00,625.6 548.50,627.5 549.00,627.0 549.50,628.5 550.00,633.2 550.50,627.9 551.00,630.1 551.50,629.5 552.00,629.6 552.50,631.2 553.00,632.5 553.50,632.4 554.00,631.9 554.50,631.0 555.00,633.7 555.50,633.3 556.00,630.8 556.50,634.1 557.00,634.2 557.50,633.5 558.00,634.8 558.50,634.0 559.00,632.7 559.50,633.7 560.00,632.7 560.50,635.6 561.00,634.2 561.50,637.0 562.00,636.3 562.50,636.0 563.00,635.6 563.50,635.4 564.00,635.2 564.50,636.8 565.00,635.3 565.50,635.2 566.00,637.0 566.50,637.0 567.00,637.0 567.50,637.0 568.00,637.0 568.50,637.0 569.00,637.0 569.50,637.0 570.00,637.0 570.50,637.0 571.00,637.0 571.50,637.0 572.00,637.0 572.50,637.0 573.00,637.0 573.50,637.0 574.00,637.0 574.50,637.0 575.00,637.0 575.50,637.0 576.00,637.0 576.50,637.0 577.00,637.0 577.50,637.0 578.00,637.0 578.50,637.0 579.00,637.0 579.50,637.0 580.00,637.0 580.50,637.0 581.00,637.0 581.50,637.0 582.00,637.0 582.50,637.0 583.00,637.0 583.50,637.0 584.00,637.0 584.50,637.0 585.00,637.0 585.50,637.0 586.00,637.0 586.50,637.0 587.00,637.0 587.50,637.0 588.00,637.0 588.50,637.0 589.00,637.0 589.50,637.0 590.00,637.0 590.50,637.0 591.00,637.0 591.50,637.0 592.00,637.0 592.50,637.0 593.00,637.0 593.50,635.5 594.00,637.0 594.50,637.0 595.00,637.0 595.50,637.0 596.00,637.0 596.50,637.0 597.00,637.0 597.50,637.0 598.00,637.0 598.50,637.0 599.00,635.5 599.50,637.0 600.00,637.0 600.50,637.0 601.00,637.0 601.50,637.0 602.00,637.0 602.50,637.0 603.00,637.0 603.50,637.0 604.00,637.0 604.50,637.0 605.00,637.0 605.50,637.0 606.00,637.0 606.50,637.0 607.00,637.0 607.50,637.0 608.00,637.0 608.50,637.0 609.00,637.0 609.50,637.0 610.00,637.0 610.50,637.0 611.00,637.0 611.50,637.0 612.00,637.0 612.50,637.0 613.00,637.0 613.50,637.0 614.00,637.0 614.50,637.0 615.00,637.0 615.50,637.0 616.00,637.0 616.50,637.0 617.00,637.0 617.50,637.0 618.00,637.0 618.50,637.0 619.00,637.0 619.50,637.0 620.00,637.0 620.50,637.0 621.00,637.0 621.50,637.0 622.00,637.0 622.50,637.0 623.00,637.0 623.50,637.0 624.00,637.0 624.50,637.0 625.00,637.0 625.50,637.0 626.00,637.0 626.50,637.0 627.00,637.0 627.50,637.0 628.00,637.0 628.50,637.0 629.00,637.0 629.50,637.0 630.00,637.0 630.50,637.0 631.00,637.0 631.50,637.0 632.00,637.0 632.50,637.0 633.00,637.0 633.50,637.0 634.00,637.0 634.50,635.5 635.00,637.0 635.50,637.0 636.00,637.0 636.50,637.0 637.00,637.0 637.50,637.0 638.00,637.0 638.50,637.0 639.00,637.0 639.50,637.0 640.00,637.0 640.50,637.0 641.00,637.0 641.50,637.0 642.00,637.0 642.50,637.0 643.00,637.0 643.50,637.0 644.00,637.0 644.50,637.0 645.00,637.0 645.50,637.0 646.00,637.0 646.50,637.0 647.00,637.0 647.50,637.0 648.00,637.0 648.50,637.0 649.00,637.0 649.50,637.0 650.00,637.0 650.50,635.5 651.00,637.0 651.50,637.0 652.00,637.0 652.50,637.0 653.00,637.0 653.50,637.0 654.00,635.5 654.50,637.0 655.00,637.0 655.50,637.0 656.00,637.0 656.50,637.0 657.00,637.0 657.50,637.0 658.00,637.0 658.50,637.0 659.00,637.0 659.50,637.0 660.00,637.0 660.50,637.0 661.00,635.5 661.50,637.0 662.00,637.0 662.50,637.0 663.00,637.0 663.50,637.0 664.00,637.0 664.50,637.0 665.00,637.0 665.50,637.0 666.00,637.0 666.50,637.0 667.00,637.0 667.50,637.0 668.00,637.0 668.50,637.0 669.00,637.0 669.50,637.0 670.00,637.0 670.50,635.5 671.00,637.0 671.50,637.0 672.00,637.0 672.50,637.0 673.00,637.0 673.50,637.0 674.00,635.5 674.50,637.0 675.00,637.0 675.50,637.0 676.00,637.0 676.50,637.0 677.00,637.0 677.50,637.0 678.00,635.5 678.50,633.9 679.00,637.0 679.50,637.0 680.00,637.0 680.50,637.0 681.00,637.0 681.50,637.0 682.00,637.0 682.50,637.0 683.00,637.0 683.50,637.0 684.00,637.0 684.50,637.0 685.00,635.5 685.50,637.0 686.00,637.0 686.50,637.0 687.00,637.0 687.50,637.0 688.00,637.0 688.50,637.0 689.00,637.0 689.50,637.0 690.00,637.0 690.50,637.0 691.00,637.0 691.50,637.0 692.00,637.0 692.50,637.0 693.00,637.0 693.50,637.0 694.00,637.0 694.50,637.0 695.00,637.0 695.50,637.0 696.00,637.0 696.50,637.0 697.00,637.0 697.50,637.0 698.00,637.0 698.50,637.0 699.00,637.0 699.50,637.0 700.00,637.0 700.50,637.0 701.00,637.0 701.50,635.5 702.00,637.0 702.50,637.0 703.00,637.0 703.50,637.0 704.00,637.0 704.50,637.0 705.00,637.0 705.50,637.0 706.00,637.0 706.50,637.0 707.00,637.0 707.50,637.0 708.00,637.0 708.50,635.5 709.00,637.0 709.50,637.0 710.00,637.0 710.50,637.0 711.00,637.0 711.50,637.0 712.00,637.0 712.50,637.0 713.00,637.0 713.50,637.0 714.00,635.5 714.50,637.0 715.00,637.0 715.50,635.5 716.00,637.0 716.50,637.0 717.00,637.0 717.50,637.0 718.00,637.0 718.50,637.0 719.00,637.0 719.50,637.0 720.00,637.0 720.50,637.0 721.00,637.0 721.50,637.0 722.00,637.0 722.50,637.0 723.00,637.0 723.50,637.0 724.00,637.0 724.50,637.0 725.00,637.0 725.50,635.5 726.00,635.5 726.50,637.0 727.00,637.0 727.50,637.0 728.00,637.0 728.50,637.0 729.00,637.0 729.50,637.0 730.00,637.0 730.50,637.0 731.00,637.0 731.50,637.0 732.00,637.0 732.50,637.0 733.00,637.0 733.50,637.0 734.00,637.0 734.50,637.0 735.00,637.0 735.50,637.0 736.00,637.0 736.50,637.0 737.00,637.0 737.50,637.0 738.00,637.0 738.50,637.0 739.00,637.0 739.50,637.0 740.00,637.0 740.50,637.0 741.00,637.0 741.50,637.0 742.00,637.0 742.50,637.0 743.00,637.0 743.50,637.0 744.00,637.0 744.50,635.5 745.00,637.0 745.50,637.0 746.00,637.0 746.50,637.0 747.00,637.0 747.50,637.0 748.00,637.0 748.50,637.0 749.00,637.0 749.50,637.0 750.00,635.5 750.50,637.0 751.00,637.0 751.50,637.0 752.00,637.0 752.50,637.0 753.00,637.0 753.50,637.0 754.00,637.0 754.50,637.0 755.00,637.0 755.50,637.0 756.00,637.0 756.50,637.0 757.00,637.0 757.50,637.0 758.00,637.0 758.50,637.0 759.00,637.0 759.50,637.0 760.00,637.0 760.50,637.0 761.00,637.0 761.50,635.5 762.00,637.0 762.50,637.0 763.00,637.0 763.50,637.0 764.00,637.0 764.50,637.0 765.00,637.0 765.50,637.0 766.00,637.0 766.50,637.0 767.00,635.5 767.50,637.0 768.00,637.0 768.50,637.0 769.00,637.0 769.50,637.0 770.00,637.0 770.50,637.0 771.00,637.0 771.50,637.0 772.00,637.0 772.50,637.0 773.00,637.0 773.50,637.0 774.00,637.0 774.50,637.0 775.00,637.0 775.50,637.0 776.00,637.0 776.50,637.0 777.00,637.0 777.50,637.0 778.00,637.0 778.50,637.0 779.00,637.0 779.50,637.0 780.00,637.0 780.50,637.0 781.00,637.0 781.50,637.0 782.00,637.0 782.50,637.0 783.00,637.0 783.50,637.0 784.00,637.0 784.50,637.0 785.00,637.0 785.50,637.0 786.00,637.0 786.50,637.0 787.00,637.0 787.50,637.0 788.00,637.0 788.50,637.0 789.00,637.0 789.50,637.0 790.00,637.0 790.50,637.0 791.00,637.0 791.50,637.0 792.00,637.0 792.50,637.0 793.00,637.0 793.50,637.0 794.00,637.0 794.50,637.0 795.00,637.0 795.50,637.0 796.00,637.0 796.50,637.0 797.00,637.0 797.50,637.0 798.00,637.0 798.50,637.0 799.00,637.0 799.50,637.0 800.00,637.0 800.50,637.0 801.00,637.0 801.50,635.5 802.00,637.0" fill="none" stroke="#2424ff" stroke-width="1.25" stroke-linejoin="miter" stroke-miterlimit="2"/>
<rect x="176" y="406" width="627" height="232" fill="none" stroke="#7f7f7f" stroke-width="2"/>
<path d="M177,636.4 H802" stroke="#2a2af0" stroke-width="1.3"/>
<rect x="700.5" y="416.5" width="14" height="11" fill="#fff" stroke="#cccccc" stroke-width="1"/>
<rect x="701" y="418" width="12" height="8" fill="#0000ff"/>
<path d="M802,396 L813,407 L802,418 L791,407 Z" fill="#ff0000"/>
<path d="M1173,407 V637 M1225,407 V637 M1276,407 V637 M1328,407 V637 M1379,407 V637 M1431,407 V637 M1482,407 V637 M1533,407 V637 M1585,407 V637 M1636,407 V637 M1688,407 V637 M1739,407 V637 M1129,637 H1754 M1129,573 H1754 M1129,509 H1754 M1129,446 H1754" stroke="#e3e3e3" stroke-width="2" fill="none"/>
<polyline points="1129.00,637.0 1129.50,637.0 1130.00,637.0 1130.50,637.0 1131.00,637.0 1131.50,637.0 1132.00,637.0 1132.50,637.0 1133.00,637.0 1133.50,637.0 1134.00,637.0 1134.50,637.0 1135.00,637.0 1135.50,637.0 1136.00,637.0 1136.50,637.0 1137.00,637.0 1137.50,637.0 1138.00,637.0 1138.50,637.0 1139.00,637.0 1139.50,637.0 1140.00,637.0 1140.50,637.0 1141.00,637.0 1141.50,637.0 1142.00,637.0 1142.50,637.0 1143.00,637.0 1143.50,637.0 1144.00,637.0 1144.50,637.0 1145.00,637.0 1145.50,637.0 1146.00,637.0 1146.50,637.0 1147.00,637.0 1147.50,637.0 1148.00,637.0 1148.50,637.0 1149.00,637.0 1149.50,637.0 1150.00,637.0 1150.50,637.0 1151.00,637.0 1151.50,637.0 1152.00,637.0 1152.50,637.0 1153.00,637.0 1153.50,637.0 1154.00,637.0 1154.50,637.0 1155.00,637.0 1155.50,637.0 1156.00,637.0 1156.50,637.0 1157.00,637.0 1157.50,637.0 1158.00,637.0 1158.50,637.0 1159.00,637.0 1159.50,637.0 1160.00,637.0 1160.50,637.0 1161.00,637.0 1161.50,637.0 1162.00,637.0 1162.50,637.0 1163.00,637.0 1163.50,637.0 1164.00,637.0 1164.50,637.0 1165.00,637.0 1165.50,637.0 1166.00,637.0 1166.50,637.0 1167.00,637.0 1167.50,637.0 1168.00,637.0 1168.50,637.0 1169.00,637.0 1169.50,637.0 1170.00,637.0 1170.50,637.0 1171.00,637.0 1171.50,637.0 1172.00,637.0 1172.50,637.0 1173.00,637.0 1173.50,637.0 1174.00,637.0 1174.50,637.0 1175.00,637.0 1175.50,637.0 1176.00,637.0 1176.50,637.0 1177.00,637.0 1177.50,637.0 1178.00,637.0 1178.50,637.0 1179.00,637.0 1179.50,637.0 1180.00,637.0 1180.50,637.0 1181.00,637.0 1181.50,637.0 1182.00,637.0 1182.50,637.0 1183.00,637.0 1183.50,637.0 1184.00,637.0 1184.50,637.0 1185.00,637.0 1185.50,637.0 1186.00,637.0 1186.50,637.0 1187.00,637.0 1187.50,637.0 1188.00,637.0 1188.50,637.0 1189.00,637.0 1189.50,637.0 1190.00,637.0 1190.50,637.0 1191.00,637.0 1191.50,637.0 1192.00,637.0 1192.50,637.0 1193.00,637.0 1193.50,637.0 1194.00,637.0 1194.50,637.0 1195.00,637.0 1195.50,637.0 1196.00,637.0 1196.50,637.0 1197.00,637.0 1197.50,637.0 1198.00,637.0 1198.50,637.0 1199.00,637.0 1199.50,637.0 1200.00,637.0 1200.50,637.0 1201.00,637.0 1201.50,637.0 1202.00,637.0 1202.50,637.0 1203.00,637.0 1203.50,637.0 1204.00,637.0 1204.50,637.0 1205.00,637.0 1205.50,637.0 1206.00,637.0 1206.50,637.0 1207.00,637.0 1207.50,637.0 1208.00,637.0 1208.50,637.0 1209.00,637.0 1209.50,637.0 1210.00,637.0 1210.50,637.0 1211.00,637.0 1211.50,637.0 1212.00,637.0 1212.50,637.0 1213.00,637.0 1213.50,637.0 1214.00,637.0 1214.50,637.0 1215.00,637.0 1215.50,637.0 1216.00,637.0 1216.50,635.7 1217.00,637.0 1217.50,637.0 1218.00,637.0 1218.50,637.0 1219.00,637.0 1219.50,637.0 1220.00,637.0 1220.50,637.0 1221.00,637.0 1221.50,637.0 1222.00,637.0 1222.50,637.0 1223.00,637.0 1223.50,637.0 1224.00,637.0 1224.50,637.0 1225.00,637.0 1225.50,637.0 1226.00,637.0 1226.50,637.0 1227.00,637.0 1227.50,637.0 1228.00,637.0 1228.50,637.0 1229.00,637.0 1229.50,637.0 1230.00,637.0 1230.50,637.0 1231.00,637.0 1231.50,637.0 1232.00,637.0 1232.50,637.0 1233.00,637.0 1233.50,637.0 1234.00,637.0 1234.50,637.0 1235.00,637.0 1235.50,637.0 1236.00,637.0 1236.50,637.0 1237.00,637.0 1237.50,637.0 1238.00,637.0 1238.50,637.0 1239.00,637.0 1239.50,637.0 1240.00,637.0 1240.50,637.0 1241.00,637.0 1241.50,637.0 1242.00,637.0 1242.50,637.0 1243.00,637.0 1243.50,637.0 1244.00,637.0 1244.50,637.0 1245.00,637.0 1245.50,637.0 1246.00,637.0 1246.50,637.0 1247.00,637.0 1247.50,637.0 1248.00,637.0 1248.50,637.0 1249.00,637.0 1249.50,637.0 1250.00,637.0 1250.50,637.0 1251.00,637.0 1251.50,637.0 1252.00,637.0 1252.50,637.0 1253.00,637.0 1253.50,637.0 1254.00,637.0 1254.50,637.0 1255.00,637.0 1255.50,637.0 1256.00,637.0 1256.50,637.0 1257.00,637.0 1257.50,637.0 1258.00,637.0 1258.50,637.0 1259.00,637.0 1259.50,637.0 1260.00,637.0 1260.50,637.0 1261.00,637.0 1261.50,637.0 1262.00,637.0 1262.50,637.0 1263.00,637.0 1263.50,637.0 1264.00,637.0 1264.50,637.0 1265.00,637.0 1265.50,637.0 1266.00,637.0 1266.50,637.0 1267.00,637.0 1267.50,637.0 1268.00,637.0 1268.50,637.0 1269.00,637.0 1269.50,637.0 1270.00,637.0 1270.50,637.0 1271.00,637.0 1271.50,637.0 1272.00,637.0 1272.50,637.0 1273.00,637.0 1273.50,637.0 1274.00,637.0 1274.50,637.0 1275.00,637.0 1275.50,637.0 1276.00,637.0 1276.50,637.0 1277.00,637.0 1277.50,637.0 1278.00,637.0 1278.50,637.0 1279.00,637.0 1279.50,637.0 1280.00,637.0 1280.50,637.0 1281.00,637.0 1281.50,637.0 1282.00,637.0 1282.50,637.0 1283.00,637.0 1283.50,637.0 1284.00,637.0 1284.50,637.0 1285.00,637.0 1285.50,637.0 1286.00,637.0 1286.50,637.0 1287.00,637.0 1287.50,637.0 1288.00,637.0 1288.50,637.0 1289.00,637.0 1289.50,637.0 1290.00,637.0 1290.50,637.0 1291.00,637.0 1291.50,637.0 1292.00,637.0 1292.50,637.0 1293.00,637.0 1293.50,637.0 1294.00,637.0 1294.50,637.0 1295.00,637.0 1295.50,637.0 1296.00,637.0 1296.50,637.0 1297.00,637.0 1297.50,637.0 1298.00,637.0 1298.50,637.0 1299.00,637.0 1299.50,637.0 1300.00,637.0 1300.50,637.0 1301.00,637.0 1301.50,637.0 1302.00,637.0 1302.50,637.0 1303.00,637.0 1303.50,637.0 1304.00,637.0 1304.50,637.0 1305.00,637.0 1305.50,637.0 1306.00,637.0 1306.50,637.0 1307.00,637.0 1307.50,637.0 1308.00,637.0 1308.50,637.0 1309.00,637.0 1309.50,637.0 1310.00,637.0 1310.50,637.0 1311.00,637.0 1311.50,637.0 1312.00,637.0 1312.50,637.0 1313.00,637.0 1313.50,637.0 1314.00,637.0 1314.50,637.0 1315.00,637.0 1315.50,637.0 1316.00,637.0 1316.50,637.0 1317.00,637.0 1317.50,637.0 1318.00,637.0 1318.50,637.0 1319.00,637.0 1319.50,637.0 1320.00,637.0 1320.50,637.0 1321.00,637.0 1321.50,637.0 1322.00,637.0 1322.50,637.0 1323.00,637.0 1323.50,637.0 1324.00,637.0 1324.50,637.0 1325.00,637.0 1325.50,637.0 1326.00,637.0 1326.50,637.0 1327.00,637.0 1327.50,637.0 1328.00,637.0 1328.50,637.0 1329.00,637.0 1329.50,637.0 1330.00,637.0 1330.50,637.0 1331.00,637.0 1331.50,637.0 1332.00,637.0 1332.50,637.0 1333.00,637.0 1333.50,637.0 1334.00,637.0 1334.50,637.0 1335.00,637.0 1335.50,637.0 1336.00,637.0 1336.50,637.0 1337.00,637.0 1337.50,637.0 1338.00,637.0 1338.50,637.0 1339.00,637.0 1339.50,637.0 1340.00,637.0 1340.50,637.0 1341.00,637.0 1341.50,637.0 1342.00,637.0 1342.50,637.0 1343.00,637.0 1343.50,637.0 1344.00,637.0 1344.50,637.0 1345.00,637.0 1345.50,637.0 1346.00,637.0 1346.50,637.0 1347.00,637.0 1347.50,637.0 1348.00,637.0 1348.50,637.0 1349.00,637.0 1349.50,637.0 1350.00,637.0 1350.50,637.0 1351.00,637.0 1351.50,637.0 1352.00,637.0 1352.50,637.0 1353.00,637.0 1353.50,637.0 1354.00,637.0 1354.50,637.0 1355.00,637.0 1355.50,637.0 1356.00,637.0 1356.50,637.0 1357.00,637.0 1357.50,637.0 1358.00,637.0 1358.50,637.0 1359.00,637.0 1359.50,637.0 1360.00,637.0 1360.50,637.0 1361.00,637.0 1361.50,637.0 1362.00,637.0 1362.50,637.0 1363.00,637.0 1363.50,637.0 1364.00,637.0 1364.50,637.0 1365.00,637.0 1365.50,637.0 1366.00,637.0 1366.50,637.0 1367.00,637.0 1367.50,637.0 1368.00,637.0 1368.50,637.0 1369.00,637.0 1369.50,637.0 1370.00,637.0 1370.50,637.0 1371.00,637.0 1371.50,637.0 1372.00,637.0 1372.50,637.0 1373.00,637.0 1373.50,637.0 1374.00,637.0 1374.50,637.0 1375.00,637.0 1375.50,637.0 1376.00,637.0 1376.50,637.0 1377.00,637.0 1377.50,637.0 1378.00,637.0 1378.50,637.0 1379.00,637.0 1379.50,637.0 1380.00,637.0 1380.50,637.0 1381.00,637.0 1381.50,637.0 1382.00,637.0 1382.50,637.0 1383.00,637.0 1383.50,637.0 1384.00,637.0 1384.50,637.0 1385.00,637.0 1385.50,637.0 1386.00,637.0 1386.50,637.0 1387.00,637.0 1387.50,637.0 1388.00,637.0 1388.50,637.0 1389.00,637.0 1389.50,637.0 1390.00,637.0 1390.50,637.0 1391.00,637.0 1391.50,637.0 1392.00,637.0 1392.50,637.0 1393.00,637.0 1393.50,637.0 1394.00,637.0 1394.50,637.0 1395.00,637.0 1395.50,637.0 1396.00,637.0 1396.50,637.0 1397.00,637.0 1397.50,637.0 1398.00,637.0 1398.50,637.0 1399.00,637.0 1399.50,637.0 1400.00,637.0 1400.50,637.0 1401.00,637.0 1401.50,637.0 1402.00,637.0 1402.50,637.0 1403.00,637.0 1403.50,637.0 1404.00,637.0 1404.50,637.0 1405.00,637.0 1405.50,637.0 1406.00,637.0 1406.50,637.0 1407.00,637.0 1407.50,637.0 1408.00,637.0 1408.50,637.0 1409.00,637.0 1409.50,637.0 1410.00,637.0 1410.50,637.0 1411.00,637.0 1411.50,637.0 1412.00,637.0 1412.50,637.0 1413.00,637.0 1413.50,637.0 1414.00,637.0 1414.50,637.0 1415.00,637.0 1415.50,637.0 1416.00,637.0 1416.50,637.0 1417.00,637.0 1417.50,637.0 1418.00,637.0 1418.50,637.0 1419.00,637.0 1419.50,637.0 1420.00,637.0 1420.50,637.0 1421.00,637.0 1421.50,635.7 1422.00,637.0 1422.50,637.0 1423.00,637.0 1423.50,637.0 1424.00,637.0 1424.50,637.0 1425.00,637.0 1425.50,637.0 1426.00,637.0 1426.50,637.0 1427.00,637.0 1427.50,637.0 1428.00,637.0 1428.50,637.0 1429.00,637.0 1429.50,637.0 1430.00,637.0 1430.50,637.0 1431.00,637.0 1431.50,637.0 1432.00,637.0 1432.50,637.0 1433.00,637.0 1433.50,637.0 1434.00,637.0 1434.50,637.0 1435.00,637.0 1435.50,637.0 1436.00,637.0 1436.50,637.0 1437.00,635.7 1437.50,637.0 1438.00,637.0 1438.50,637.0 1439.00,637.0 1439.50,637.0 1440.00,637.0 1440.50,637.0 1441.00,637.0 1441.50,637.0 1442.00,637.0 1442.50,637.0 1443.00,635.7 1443.50,637.0 1444.00,637.0 1444.50,637.0 1445.00,637.0 1445.50,637.0 1446.00,636.7 1446.50,636.5 1447.00,636.4 1447.50,637.0 1448.00,635.7 1448.50,637.0 1449.00,634.0 1449.50,634.9 1450.00,632.5 1450.50,633.9 1451.00,635.3 1451.50,631.6 1452.00,634.2 1452.50,634.1 1453.00,633.1 1453.50,637.0 1454.00,633.5 1454.50,624.4 1455.00,628.9 1455.50,627.8 1456.00,630.3 1456.50,623.7 1457.00,631.0 1457.50,619.4 1458.00,619.7 1458.50,630.4 1459.00,622.9 1459.50,623.4 1460.00,623.1 1460.50,624.0 1461.00,621.3 1461.50,620.6 1462.00,616.8 1462.50,618.2 1463.00,611.6 1463.50,606.2 1464.00,615.2 1464.50,608.9 1465.00,606.2 1465.50,615.7 1466.00,618.4 1466.50,608.2 1467.00,602.2 1467.50,589.1 1468.00,604.3 1468.50,578.6 1469.00,565.4 1469.50,597.0 1470.00,568.9 1470.50,575.0 1471.00,546.5 1471.50,572.8 1472.00,570.8 1472.50,593.9 1473.00,566.8 1473.50,571.7 1474.00,527.4 1474.50,546.6 1475.00,533.4 1475.50,523.6 1476.00,559.3 1476.50,511.6 1477.00,535.8 1477.50,504.5 1478.00,533.2 1478.50,527.6 1479.00,508.0 1479.50,477.3 1480.00,495.8 1480.50,482.8 1481.00,466.3 1481.50,492.6 1482.00,519.1 1482.50,470.9 1483.00,507.2 1483.50,489.3 1484.00,475.8 1484.50,426.2 1485.00,461.7 1485.50,448.5 1486.00,439.0 1486.50,472.5 1487.00,445.6 1487.50,426.0 1488.00,470.3 1488.50,498.7 1489.00,426.8 1489.50,427.3 1490.00,429.5 1490.50,441.0 1491.00,434.2 1491.50,449.5 1492.00,472.5 1492.50,465.2 1493.00,447.1 1493.50,454.3 1494.00,445.5 1494.50,469.1 1495.00,482.1 1495.50,452.2 1496.00,456.8 1496.50,445.7 1497.00,464.2 1497.50,495.2 1498.00,499.0 1498.50,479.9 1499.00,508.5 1499.50,511.1 1500.00,515.3 1500.50,516.3 1501.00,516.1 1501.50,539.9 1502.00,518.2 1502.50,495.9 1503.00,524.9 1503.50,519.0 1504.00,541.3 1504.50,541.3 1505.00,515.3 1505.50,552.8 1506.00,549.9 1506.50,552.2 1507.00,566.2 1507.50,552.4 1508.00,576.9 1508.50,563.2 1509.00,568.9 1509.50,582.8 1510.00,588.8 1510.50,607.1 1511.00,578.1 1511.50,584.3 1512.00,581.2 1512.50,593.1 1513.00,592.6 1513.50,606.1 1514.00,611.3 1514.50,622.2 1515.00,596.5 1515.50,612.9 1516.00,618.1 1516.50,611.7 1517.00,628.5 1517.50,615.0 1518.00,625.4 1518.50,616.4 1519.00,618.6 1519.50,624.0 1520.00,627.7 1520.50,637.0 1521.00,627.2 1521.50,622.3 1522.00,625.8 1522.50,634.4 1523.00,630.5 1523.50,629.8 1524.00,631.5 1524.50,633.4 1525.00,629.1 1525.50,630.6 1526.00,631.6 1526.50,631.0 1527.00,634.7 1527.50,632.8 1528.00,637.0 1528.50,632.7 1529.00,634.1 1529.50,632.8 1530.00,633.7 1530.50,635.2 1531.00,635.8 1531.50,635.3 1532.00,633.5 1532.50,634.7 1533.00,635.3 1533.50,635.5 1534.00,634.5 1534.50,636.0 1535.00,634.3 1535.50,637.0 1536.00,637.0 1536.50,637.0 1537.00,637.0 1537.50,637.0 1538.00,637.0 1538.50,637.0 1539.00,637.0 1539.50,637.0 1540.00,637.0 1540.50,637.0 1541.00,637.0 1541.50,637.0 1542.00,637.0 1542.50,637.0 1543.00,637.0 1543.50,637.0 1544.00,637.0 1544.50,637.0 1545.00,637.0 1545.50,637.0 1546.00,637.0 1546.50,637.0 1547.00,637.0 1547.50,637.0 1548.00,637.0 1548.50,637.0 1549.00,637.0 1549.50,637.0 1550.00,637.0 1550.50,637.0 1551.00,637.0 1551.50,637.0 1552.00,637.0 1552.50,637.0 1553.00,637.0 1553.50,637.0 1554.00,637.0 1554.50,637.0 1555.00,637.0 1555.50,637.0 1556.00,634.5 1556.50,637.0 1557.00,637.0 1557.50,637.0 1558.00,637.0 1558.50,637.0 1559.00,637.0 1559.50,637.0 1560.00,637.0 1560.50,637.0 1561.00,637.0 1561.50,637.0 1562.00,637.0 1562.50,637.0 1563.00,637.0 1563.50,637.0 1564.00,637.0 1564.50,637.0 1565.00,637.0 1565.50,637.0 1566.00,637.0 1566.50,637.0 1567.00,637.0 1567.50,637.0 1568.00,637.0 1568.50,637.0 1569.00,637.0 1569.50,637.0 1570.00,637.0 1570.50,635.7 1571.00,635.7 1571.50,637.0 1572.00,637.0 1572.50,637.0 1573.00,637.0 1573.50,637.0 1574.00,637.0 1574.50,637.0 1575.00,637.0 1575.50,637.0 1576.00,637.0 1576.50,637.0 1577.00,637.0 1577.50,637.0 1578.00,637.0 1578.50,637.0 1579.00,637.0 1579.50,637.0 1580.00,637.0 1580.50,637.0 1581.00,637.0 1581.50,637.0 1582.00,637.0 1582.50,637.0 1583.00,635.7 1583.50,635.7 1584.00,635.7 1584.50,637.0 1585.00,637.0 1585.50,637.0 1586.00,637.0 1586.50,637.0 1587.00,637.0 1587.50,637.0 1588.00,637.0 1588.50,637.0 1589.00,637.0 1589.50,637.0 1590.00,637.0 1590.50,637.0 1591.00,634.5 1591.50,637.0 1592.00,637.0 1592.50,637.0 1593.00,637.0 1593.50,637.0 1594.00,637.0 1594.50,637.0 1595.00,637.0 1595.50,637.0 1596.00,635.7 1596.50,637.0 1597.00,637.0 1597.50,637.0 1598.00,637.0 1598.50,637.0 1599.00,637.0 1599.50,637.0 1600.00,637.0 1600.50,637.0 1601.00,637.0 1601.50,637.0 1602.00,637.0 1602.50,637.0 1603.00,637.0 1603.50,637.0 1604.00,637.0 1604.50,637.0 1605.00,637.0 1605.50,637.0 1606.00,637.0 1606.50,637.0 1607.00,637.0 1607.50,637.0 1608.00,637.0 1608.50,637.0 1609.00,637.0 1609.50,637.0 1610.00,637.0 1610.50,637.0 1611.00,637.0 1611.50,637.0 1612.00,637.0 1612.50,637.0 1613.00,637.0 1613.50,637.0 1614.00,637.0 1614.50,637.0 1615.00,637.0 1615.50,637.0 1616.00,637.0 1616.50,637.0 1617.00,637.0 1617.50,637.0 1618.00,637.0 1618.50,637.0 1619.00,637.0 1619.50,637.0 1620.00,637.0 1620.50,637.0 1621.00,637.0 1621.50,637.0 1622.00,637.0 1622.50,637.0 1623.00,637.0 1623.50,637.0 1624.00,637.0 1624.50,637.0 1625.00,637.0 1625.50,637.0 1626.00,637.0 1626.50,637.0 1627.00,637.0 1627.50,637.0 1628.00,637.0 1628.50,637.0 1629.00,637.0 1629.50,637.0 1630.00,637.0 1630.50,637.0 1631.00,637.0 1631.50,637.0 1632.00,637.0 1632.50,637.0 1633.00,637.0 1633.50,637.0 1634.00,637.0 1634.50,637.0 1635.00,637.0 1635.50,637.0 1636.00,637.0 1636.50,637.0 1637.00,637.0 1637.50,637.0 1638.00,637.0 1638.50,637.0 1639.00,637.0 1639.50,637.0 1640.00,637.0 1640.50,637.0 1641.00,637.0 1641.50,637.0 1642.00,635.7 1642.50,637.0 1643.00,637.0 1643.50,637.0 1644.00,635.7 1644.50,637.0 1645.00,637.0 1645.50,637.0 1646.00,637.0 1646.50,637.0 1647.00,637.0 1647.50,637.0 1648.00,637.0 1648.50,637.0 1649.00,637.0 1649.50,637.0 1650.00,637.0 1650.50,637.0 1651.00,637.0 1651.50,637.0 1652.00,637.0 1652.50,637.0 1653.00,637.0 1653.50,637.0 1654.00,637.0 1654.50,637.0 1655.00,637.0 1655.50,637.0 1656.00,637.0 1656.50,637.0 1657.00,637.0 1657.50,637.0 1658.00,637.0 1658.50,637.0 1659.00,637.0 1659.50,637.0 1660.00,637.0 1660.50,637.0 1661.00,637.0 1661.50,637.0 1662.00,637.0 1662.50,637.0 1663.00,637.0 1663.50,637.0 1664.00,637.0 1664.50,637.0 1665.00,637.0 1665.50,637.0 1666.00,637.0 1666.50,635.7 1667.00,637.0 1667.50,637.0 1668.00,637.0 1668.50,637.0 1669.00,637.0 1669.50,637.0 1670.00,637.0 1670.50,637.0 1671.00,637.0 1671.50,637.0 1672.00,637.0 1672.50,637.0 1673.00,637.0 1673.50,637.0 1674.00,637.0 1674.50,637.0 1675.00,637.0 1675.50,637.0 1676.00,637.0 1676.50,637.0 1677.00,637.0 1677.50,637.0 1678.00,637.0 1678.50,637.0 1679.00,637.0 1679.50,637.0 1680.00,637.0 1680.50,637.0 1681.00,637.0 1681.50,637.0 1682.00,637.0 1682.50,637.0 1683.00,637.0 1683.50,637.0 1684.00,637.0 1684.50,637.0 1685.00,637.0 1685.50,637.0 1686.00,637.0 1686.50,637.0 1687.00,637.0 1687.50,637.0 1688.00,637.0 1688.50,637.0 1689.00,637.0 1689.50,637.0 1690.00,637.0 1690.50,637.0 1691.00,637.0 1691.50,637.0 1692.00,637.0 1692.50,637.0 1693.00,637.0 1693.50,635.7 1694.00,637.0 1694.50,637.0 1695.00,637.0 1695.50,637.0 1696.00,637.0 1696.50,637.0 1697.00,637.0 1697.50,637.0 1698.00,637.0 1698.50,637.0 1699.00,637.0 1699.50,637.0 1700.00,637.0 1700.50,637.0 1701.00,637.0 1701.50,637.0 1702.00,637.0 1702.50,637.0 1703.00,637.0 1703.50,637.0 1704.00,637.0 1704.50,637.0 1705.00,637.0 1705.50,637.0 1706.00,637.0 1706.50,637.0 1707.00,637.0 1707.50,637.0 1708.00,637.0 1708.50,637.0 1709.00,637.0 1709.50,637.0 1710.00,637.0 1710.50,637.0 1711.00,637.0 1711.50,637.0 1712.00,637.0 1712.50,637.0 1713.00,637.0 1713.50,637.0 1714.00,637.0 1714.50,637.0 1715.00,637.0 1715.50,635.7 1716.00,637.0 1716.50,637.0 1717.00,637.0 1717.50,637.0 1718.00,637.0 1718.50,635.7 1719.00,637.0 1719.50,637.0 1720.00,637.0 1720.50,637.0 1721.00,637.0 1721.50,637.0 1722.00,637.0 1722.50,637.0 1723.00,637.0 1723.50,637.0 1724.00,637.0 1724.50,637.0 1725.00,637.0 1725.50,637.0 1726.00,637.0 1726.50,637.0 1727.00,637.0 1727.50,637.0 1728.00,637.0 1728.50,637.0 1729.00,637.0 1729.50,637.0 1730.00,637.0 1730.50,637.0 1731.00,637.0 1731.50,637.0 1732.00,637.0 1732.50,637.0 1733.00,637.0 1733.50,637.0 1734.00,634.5 1734.50,637.0 1735.00,637.0 1735.50,637.0 1736.00,637.0 1736.50,637.0 1737.00,637.0 1737.50,637.0 1738.00,637.0 1738.50,637.0 1739.00,637.0 1739.50,637.0 1740.00,637.0 1740.50,637.0 1741.00,637.0 1741.50,637.0 1742.00,637.0 1742.50,637.0 1743.00,637.0 1743.50,637.0 1744.00,637.0 1744.50,637.0 1745.00,637.0 1745.50,637.0 1746.00,635.7 1746.50,637.0 1747.00,637.0 1747.50,637.0 1748.00,637.0 1748.50,637.0 1749.00,637.0 1749.50,637.0 1750.00,635.7 1750.50,637.0 1751.00,637.0 1751.50,637.0 1752.00,637.0 1752.50,637.0 1753.00,637.0 1753.50,637.0 1754.00,637.0" fill="none" stroke="#2424ff" stroke-width="1.25" stroke-linejoin="miter" stroke-miterlimit="2"/>
<rect x="1128" y="406" width="627" height="232" fill="none" stroke="#000000" stroke-width="2"/>
<path d="M1129,636.4 H1754" stroke="#2a2af0" stroke-width="1.3"/>
<rect x="1652.5" y="416.5" width="14" height="11" fill="#fff" stroke="#cccccc" stroke-width="1"/>
<rect x="1653" y="418" width="12" height="8" fill="#0000ff"/>
<path d="M1754,396 L1765,407 L1754,418 L1743,407 Z" fill="#00ee00"/>
<path d="M221,678 V908 M273,678 V908 M324,678 V908 M376,678 V908 M427,678 V908 M479,678 V908 M530,678 V908 M581,678 V908 M633,678 V908 M684,678 V908 M736,678 V908 M787,678 V908 M177,908 H802 M177,850 H802 M177,793 H802 M177,735 H802 M177,678 H802" stroke="#f0f0f0" stroke-width="2" fill="none"/>
<rect x="176" y="677" width="627" height="232" fill="none" stroke="#7f7f7f" stroke-width="2"/>
<path d="M177,793.0 H802" stroke="#9696ff" stroke-width="2"/>
<rect x="700.5" y="687.5" width="14" height="11" fill="#fff" stroke="#cccccc" stroke-width="1"/>
<rect x="701" y="689" width="12" height="8" fill="#0000ff"/>
<path d="M802,782 L813,793 L802,804 L791,793 Z" fill="#ff0000"/>
<g clip-path="url(#tclip0)"><text transform="translate(10.00,27.00) scale(0.9700,1)" font-family="'Liberation Sans'" font-weight="normal" font-size="14.97" fill="#15141a" >AIDA</text></g>
<g clip-path="url(#tclip1)"><text transform="translate(202.24,27.00) scale(0.9700,1)" font-family="'Liberation Sans'" font-weight="normal" font-size="14.97" fill="#15141a" >Experiment Control @ carme-gsi</text></g>
<g clip-path="url(#tclip2)"><text transform="translate(395.61,27.00) scale(0.9700,1)" font-family="'Liberation Sans'" font-weight="normal" font-size="14.97" fill="#15141a" >Run Control @ carme-gsi</text></g>
<g clip-path="url(#tclip3)"><text transform="translate(589.66,27.00) scale(0.9700,1)" font-family="'Liberation Sans'" font-weight="normal" font-size="14.97" fill="#15141a" >Spectrum Browser @ carme-gsi</text></g>
<g clip-path="url(#tclip4)"><text transform="translate(783.03,27.00) scale(0.9700,1)" font-family="'Liberation Sans'" font-weight="normal" font-size="14.97" fill="#15141a" >Statistics @ carme-gsi</text></g>
<g clip-path="url(#tclip5)"><text transform="translate(976.17,27.00) scale(0.9700,1)" font-family="'Liberation Sans'" font-weight="normal" font-size="14.97" fill="#15141a" >Control @ carme-gsi</text></g>
<g clip-path="url(#tclip6)"><text transform="translate(1169.77,27.00) scale(0.9700,1)" font-family="'Liberation Sans'" font-weight="normal" font-size="14.97" fill="#15141a" >System wide Checks @ carme-gsi</text></g>
<g clip-path="url(#tclip7)"><text transform="translate(1363.36,27.00) scale(0.9700,1)" font-family="'Liberation Sans'" font-weight="normal" font-size="14.97" fill="#15141a" >Temperature and status summary</text></g>
<g clip-path="url(#tclip8)"><text transform="translate(1556.96,27.00) scale(0.9700,1)" font-family="'Liberation Sans'" font-weight="normal" font-size="14.97" fill="#15141a" >ASIC Control @ carme-gsi</text></g>
<text transform="translate(320.84,68.90) scale(1.0707,1)" font-family="'Liberation Sans'" font-weight="normal" font-size="14.39" fill="#15141a" >localhost</text>
<text transform="translate(381.98,68.90) scale(1.0878,1)" font-family="'Liberation Sans'" font-weight="normal" font-size="14.39" fill="#737373" >:8015/Spectrum/Spectrum.tml</text>
<text transform="translate(1623.26,68.40) scale(0.9227,1)" font-family="'Liberation Sans'" font-weight="normal" font-size="12.50" fill="#15141a" >90%</text>
<text transform="translate(7.01,136.00) scale(1.2120,1)" font-family="'Liberation Serif'" font-weight="bold" font-size="17.40" fill="#ff0000" stroke="#ff0000" stroke-width="0.35">Spectrum Browser @ http carme-gsi.cryring.lan 8015</text>
<text transform="translate(1444.31,136.00) scale(1.2433,1)" font-family="'Liberation Serif'" font-weight="bold" font-size="17.71" fill="#ff0000" stroke="#ff0000" stroke-width="0.35">client address is 127.0.0.1</text>
<text transform="translate(380.50,205.00) scale(1.1080,1)" font-family="'Liberation Serif'" font-weight="normal" font-size="16.18" fill="#ff0000" stroke="#ff0000" stroke-width="0.2">Acquisition Servers</text>
<text transform="translate(1298.13,206.00) scale(1.1302,1)" font-family="'Liberation Serif'" font-weight="bold" font-size="16.49" fill="#ff0000" stroke="#ff0000" stroke-width="0.35">Current Acquisition Server aida05</text>
<text transform="translate(6.65,256.20) scale(1.1156,1)" font-family="'Liberation Serif'" font-weight="normal" font-size="16.49" fill="#ff0000" >Spectrum Name:</text>
<text transform="translate(959.63,290.00) scale(1.1197,1)" font-family="'Liberation Serif'" font-weight="normal" font-size="16.18" fill="#ff0000" >Channel:</text>
<text transform="translate(1021.45,328.80) scale(0.9867,1)" font-family="'Liberation Serif'" font-weight="normal" font-size="16.18" fill="#ff0000" >XMin</text>
<text transform="translate(1170.95,328.80) scale(1.0025,1)" font-family="'Liberation Serif'" font-weight="normal" font-size="16.18" fill="#ff0000" >XMax</text>
<text transform="translate(1344.60,328.80) scale(0.9570,1)" font-family="'Liberation Serif'" font-weight="normal" font-size="16.18" fill="#ff0000" >YMin</text>
<text transform="translate(1532.50,328.80) scale(0.9722,1)" font-family="'Liberation Serif'" font-weight="normal" font-size="16.18" fill="#ff0000" >YMax</text>
<text transform="translate(1602.12,992.60) scale(1.1224,1)" font-family="'Liberation Serif'" font-weight="normal" font-size="16.18" fill="#ff0000" stroke="#ff0000" stroke-width="0.2">Last Updated: February 12, 2022 16:01:31</text>
<text transform="translate(9.02,1040.00) scale(1.0567,1)" font-family="'Liberation Serif'" font-weight="normal" font-size="16.79" fill="#0000ee" >Home</text>
<text transform="translate(531.43,205.00) scale(0.9050,1)" font-family="'Liberation Sans'" font-weight="normal" font-size="13.08" fill="#000" >aida05</text>
<text transform="translate(133.86,256.00) scale(0.9050,1)" font-family="'Liberation Sans'" font-weight="normal" font-size="13.08" fill="#000" >1.8.L</text>
<text transform="translate(613.43,256.00) scale(0.9050,1)" font-family="'Liberation Sans'" font-weight="normal" font-size="13.08" fill="#000" >Select a spectrum</text>
<text transform="translate(737.52,256.00) scale(0.9050,1)" font-family="'Liberation Sans'" font-weight="normal" font-size="13.08" fill="#000" >multi</text>
<text transform="translate(1014.19,256.00) scale(0.9050,1)" font-family="'Liberation Sans'" font-weight="normal" font-size="13.08" fill="#000" >Show</text>
<text transform="translate(1052.78,256.00) scale(0.9050,1)" font-family="'Liberation Sans'" font-weight="normal" font-size="13.08" fill="#000" >Update</text>
<text transform="translate(1099.71,256.00) scale(0.9050,1)" font-family="'Liberation Sans'" font-weight="normal" font-size="13.08" fill="#000" >Update All</text>
<text transform="translate(1163.63,256.00) scale(0.9050,1)" font-family="'Liberation Sans'" font-weight="normal" font-size="13.08" fill="#000" >Zero</text>
<text transform="translate(1516.43,256.00) scale(0.9050,1)" font-family="'Liberation Sans'" font-weight="normal" font-size="13.08" fill="#000" >Spectra functions</text>
<text transform="translate(1822.21,256.00) scale(0.9050,1)" font-family="'Liberation Sans'" font-weight="normal" font-size="13.08" fill="#000" >What are these?</text>
<text transform="translate(11.80,290.00) scale(0.9050,1)" font-family="'Liberation Sans'" font-weight="normal" font-size="13.08" fill="#000" >View functions</text>
<text transform="translate(249.80,290.00) scale(0.9050,1)" font-family="'Liberation Sans'" font-weight="normal" font-size="13.08" fill="#000" >Arrange functions</text>
<text transform="translate(488.80,290.00) scale(0.9050,1)" font-family="'Liberation Sans'" font-weight="normal" font-size="13.08" fill="#000" >Analysis functions</text>
<text transform="translate(726.62,290.00) scale(0.9050,1)" font-family="'Liberation Sans'" font-weight="normal" font-size="13.08" fill="#000" >Tags &amp; Fits</text>
<text transform="translate(1201.88,290.00) scale(0.9050,1)" font-family="'Liberation Sans'" font-weight="normal" font-size="13.08" fill="#000" >Number of Galleries</text>
<text transform="translate(1439.88,290.00) scale(0.9050,1)" font-family="'Liberation Sans'" font-weight="normal" font-size="13.08" fill="#000" >Layout ID=3</text>
<text transform="translate(1822.21,290.00) scale(0.9050,1)" font-family="'Liberation Sans'" font-weight="normal" font-size="13.08" fill="#000" >What are these?</text>
<text transform="translate(663.54,329.00) scale(0.9050,1)" font-family="'Liberation Sans'" font-weight="normal" font-size="13.08" fill="#000" >x</text>
<text transform="translate(742.20,329.00) scale(0.9050,1)" font-family="'Liberation Sans'" font-weight="normal" font-size="13.08" fill="#000" >new</text>
<text transform="translate(848.78,329.00) scale(0.9050,1)" font-family="'Liberation Sans'" font-weight="normal" font-size="13.08" fill="#000" >all</text>
<text transform="translate(926.18,329.00) scale(0.9050,1)" font-family="'Liberation Sans'" font-weight="normal" font-size="13.08" fill="#000" >linear</text>
<text transform="translate(1062.86,329.00) scale(0.9050,1)" font-family="'Liberation Sans'" font-weight="normal" font-size="13.08" fill="#000" >18066</text>
<text transform="translate(1216.05,329.00) scale(0.9050,1)" font-family="'Liberation Sans'" font-weight="normal" font-size="13.08" fill="#000" >24137</text>
<text transform="translate(1385.23,329.00) scale(0.9050,1)" font-family="'Liberation Sans'" font-weight="normal" font-size="13.08" fill="#000" >0</text>
<text transform="translate(1575.86,329.00) scale(0.9050,1)" font-family="'Liberation Sans'" font-weight="normal" font-size="13.08" fill="#000" >181</text>
<text transform="translate(1822.21,329.00) scale(0.9050,1)" font-family="'Liberation Sans'" font-weight="normal" font-size="13.08" fill="#000" >What are these?</text>
<text transform="translate(11.06,367.00) scale(0.9050,1)" font-family="'Liberation Sans'" font-weight="normal" font-size="13.08" fill="#000" >Update Rate (8 secs)</text>
<text transform="translate(488.05,367.00) scale(0.9050,1)" font-family="'Liberation Sans'" font-weight="normal" font-size="13.08" fill="#000" >Auto Update ON</text>
<text transform="translate(10.97,959.00) scale(0.9050,1)" font-family="'Liberation Sans'" font-weight="normal" font-size="13.08" fill="#000" >Empty Log Window</text>
<text transform="translate(127.05,959.00) scale(0.9050,1)" font-family="'Liberation Sans'" font-weight="normal" font-size="13.08" fill="#000" >Send Log Window to ELog</text>
<text transform="translate(278.61,959.00) scale(0.9050,1)" font-family="'Liberation Sans'" font-weight="normal" font-size="13.08" fill="#000" >Reload</text>
<text transform="translate(327.55,959.00) scale(0.9050,1)" font-family="'Liberation Sans'" font-weight="normal" font-size="13.08" fill="#000" >Reset</text>
<text transform="translate(370.81,959.00) scale(0.9050,1)" font-family="'Liberation Sans'" font-weight="normal" font-size="13.08" fill="#000" >Show Variables</text>
<text transform="translate(465.22,959.00) scale(0.9050,1)" font-family="'Liberation Sans'" font-weight="normal" font-size="13.08" fill="#000" >Show Log Window</text>
<text transform="translate(575.73,959.00) scale(0.9050,1)" font-family="'Liberation Sans'" font-weight="normal" font-size="13.08" fill="#000" >Enable Logging</text>
<text transform="translate(1797.50,959.00) scale(0.9050,1)" font-family="'Liberation Sans'" font-weight="normal" font-size="13.08" fill="#000" >How to use this page</text>
<text transform="translate(203.08,653.00) scale(1.2000,1)" font-family="'Liberation Serif'" font-weight="normal" font-size="12.37" fill="#545454" >18500</text>
<text transform="translate(254.56,653.00) scale(1.2000,1)" font-family="'Liberation Serif'" font-weight="normal" font-size="12.37" fill="#545454" >19000</text>
<text transform="translate(306.03,653.00) scale(1.2000,1)" font-family="'Liberation Serif'" font-weight="normal" font-size="12.37" fill="#545454" >19500</text>
<text transform="translate(357.85,653.00) scale(1.2000,1)" font-family="'Liberation Serif'" font-weight="normal" font-size="12.37" fill="#545454" >20000</text>
<text transform="translate(409.33,653.00) scale(1.2000,1)" font-family="'Liberation Serif'" font-weight="normal" font-size="12.37" fill="#545454" >20500</text>
<text transform="translate(460.80,653.00) scale(1.2000,1)" font-family="'Liberation Serif'" font-weight="normal" font-size="12.37" fill="#545454" >21000</text>
<text transform="translate(512.28,653.00) scale(1.2000,1)" font-family="'Liberation Serif'" font-weight="normal" font-size="12.37" fill="#545454" >21500</text>
<text transform="translate(563.75,653.00) scale(1.2000,1)" font-family="'Liberation Serif'" font-weight="normal" font-size="12.37" fill="#545454" >22000</text>
<text transform="translate(615.22,653.00) scale(1.2000,1)" font-family="'Liberation Serif'" font-weight="normal" font-size="12.37" fill="#545454" >22500</text>
<text transform="translate(666.70,653.00) scale(1.2000,1)" font-family="'Liberation Serif'" font-weight="normal" font-size="12.37" fill="#545454" >23000</text>
<text transform="translate(718.17,653.00) scale(1.2000,1)" font-family="'Liberation Serif'" font-weight="normal" font-size="12.37" fill="#545454" >23500</text>
<text transform="translate(769.65,653.00) scale(1.2000,1)" font-family="'Liberation Serif'" font-weight="normal" font-size="12.37" fill="#545454" >24000</text>
<text transform="translate(165.44,641.30) scale(1.2000,1)" font-family="'Liberation Serif'" font-weight="normal" font-size="12.37" fill="#545454" >0</text>
<text transform="translate(158.02,602.97) scale(1.2000,1)" font-family="'Liberation Serif'" font-weight="normal" font-size="12.37" fill="#545454" >25</text>
<text transform="translate(158.02,564.63) scale(1.2000,1)" font-family="'Liberation Serif'" font-weight="normal" font-size="12.37" fill="#545454" >50</text>
<text transform="translate(158.02,526.30) scale(1.2000,1)" font-family="'Liberation Serif'" font-weight="normal" font-size="12.37" fill="#545454" >75</text>
<text transform="translate(150.60,487.97) scale(1.2000,1)" font-family="'Liberation Serif'" font-weight="normal" font-size="12.37" fill="#545454" >100</text>
<text transform="translate(150.60,449.63) scale(1.2000,1)" font-family="'Liberation Serif'" font-weight="normal" font-size="12.37" fill="#545454" >125</text>
<text transform="translate(150.60,411.30) scale(1.2000,1)" font-family="'Liberation Serif'" font-weight="normal" font-size="12.37" fill="#545454" >150</text>
<text transform="translate(718.32,426.00) scale(1.2766,1)" font-family="'Liberation Serif'" font-weight="normal" font-size="11.91" fill="#808080" >aida01 1.8.L</text>
<text transform="translate(1155.08,653.00) scale(1.2000,1)" font-family="'Liberation Serif'" font-weight="normal" font-size="12.37" fill="#545454" >18500</text>
<text transform="translate(1206.56,653.00) scale(1.2000,1)" font-family="'Liberation Serif'" font-weight="normal" font-size="12.37" fill="#545454" >19000</text>
<text transform="translate(1258.03,653.00) scale(1.2000,1)" font-family="'Liberation Serif'" font-weight="normal" font-size="12.37" fill="#545454" >19500</text>
<text transform="translate(1309.85,653.00) scale(1.2000,1)" font-family="'Liberation Serif'" font-weight="normal" font-size="12.37" fill="#545454" >20000</text>
<text transform="translate(1361.33,653.00) scale(1.2000,1)" font-family="'Liberation Serif'" font-weight="normal" font-size="12.37" fill="#545454" >20500</text>
<text transform="translate(1412.80,653.00) scale(1.2000,1)" font-family="'Liberation Serif'" font-weight="normal" font-size="12.37" fill="#545454" >21000</text>
<text transform="translate(1464.28,653.00) scale(1.2000,1)" font-family="'Liberation Serif'" font-weight="normal" font-size="12.37" fill="#545454" >21500</text>
<text transform="translate(1515.75,653.00) scale(1.2000,1)" font-family="'Liberation Serif'" font-weight="normal" font-size="12.37" fill="#545454" >22000</text>
<text transform="translate(1567.22,653.00) scale(1.2000,1)" font-family="'Liberation Serif'" font-weight="normal" font-size="12.37" fill="#545454" >22500</text>
<text transform="translate(1618.70,653.00) scale(1.2000,1)" font-family="'Liberation Serif'" font-weight="normal" font-size="12.37" fill="#545454" >23000</text>
<text transform="translate(1670.17,653.00) scale(1.2000,1)" font-family="'Liberation Serif'" font-weight="normal" font-size="12.37" fill="#545454" >23500</text>
<text transform="translate(1721.65,653.00) scale(1.2000,1)" font-family="'Liberation Serif'" font-weight="normal" font-size="12.37" fill="#545454" >24000</text>
<text transform="translate(1117.44,641.30) scale(1.2000,1)" font-family="'Liberation Serif'" font-weight="normal" font-size="12.37" fill="#545454" >0</text>
<text transform="translate(1110.02,577.76) scale(1.2000,1)" font-family="'Liberation Serif'" font-weight="normal" font-size="12.37" fill="#545454" >50</text>
<text transform="translate(1102.60,514.23) scale(1.2000,1)" font-family="'Liberation Serif'" font-weight="normal" font-size="12.37" fill="#545454" >100</text>
<text transform="translate(1102.60,450.69) scale(1.2000,1)" font-family="'Liberation Serif'" font-weight="normal" font-size="12.37" fill="#545454" >150</text>
<text transform="translate(1670.32,426.00) scale(1.2766,1)" font-family="'Liberation Serif'" font-weight="normal" font-size="11.91" fill="#222222" >aida02 1.8.L</text>
<text transform="translate(203.08,924.00) scale(1.2000,1)" font-family="'Liberation Serif'" font-weight="normal" font-size="12.37" fill="#545454" >18500</text>
<text transform="translate(254.56,924.00) scale(1.2000,1)" font-family="'Liberation Serif'" font-weight="normal" font-size="12.37" fill="#545454" >19000</text>
<text transform="translate(306.03,924.00) scale(1.2000,1)" font-family="'Liberation Serif'" font-weight="normal" font-size="12.37" fill="#545454" >19500</text>
<text transform="translate(357.85,924.00) scale(1.2000,1)" font-family="'Liberation Serif'" font-weight="normal" font-size="12.37" fill="#545454" >20000</text>
<text transform="translate(409.33,924.00) scale(1.2000,1)" font-family="'Liberation Serif'" font-weight="normal" font-size="12.37" fill="#545454" >20500</text>
<text transform="translate(460.80,924.00) scale(1.2000,1)" font-family="'Liberation Serif'" font-weight="normal" font-size="12.37" fill="#545454" >21000</text>
<text transform="translate(512.28,924.00) scale(1.2000,1)" font-family="'Liberation Serif'" font-weight="normal" font-size="12.37" fill="#545454" >21500</text>
<text transform="translate(563.75,924.00) scale(1.2000,1)" font-family="'Liberation Serif'" font-weight="normal" font-size="12.37" fill="#545454" >22000</text>
<text transform="translate(615.22,924.00) scale(1.2000,1)" font-family="'Liberation Serif'" font-weight="normal" font-size="12.37" fill="#545454" >22500</text>
<text transform="translate(666.70,924.00) scale(1.2000,1)" font-family="'Liberation Serif'" font-weight="normal" font-size="12.37" fill="#545454" >23000</text>
<text transform="translate(718.17,924.00) scale(1.2000,1)" font-family="'Liberation Serif'" font-weight="normal" font-size="12.37" fill="#545454" >23500</text>
<text transform="translate(769.65,924.00) scale(1.2000,1)" font-family="'Liberation Serif'" font-weight="normal" font-size="12.37" fill="#545454" >24000</text>
<text transform="translate(149.37,912.30) scale(1.2000,1)" font-family="'Liberation Serif'" font-weight="normal" font-size="12.37" fill="#545454" >-1.0</text>
<text transform="translate(149.37,854.80) scale(1.2000,1)" font-family="'Liberation Serif'" font-weight="normal" font-size="12.37" fill="#545454" >-0.5</text>
<text transform="translate(154.31,797.30) scale(1.2000,1)" font-family="'Liberation Serif'" font-weight="normal" font-size="12.37" fill="#545454" >0.0</text>
<text transform="translate(154.31,739.80) scale(1.2000,1)" font-family="'Liberation Serif'" font-weight="normal" font-size="12.37" fill="#545454" >0.5</text>
<text transform="translate(154.31,682.30) scale(1.2000,1)" font-family="'Liberation Serif'" font-weight="normal" font-size="12.37" fill="#545454" >1.0</text>
<text transform="translate(718.32,697.00) scale(1.2766,1)" font-family="'Liberation Serif'" font-weight="normal" font-size="11.91" fill="#808080" >aida05 1.8.L</text>
<path d="M171.0,18.5 L179.0,26 M179.0,18.5 L171.0,26" stroke="#2b2a33" stroke-width="1.2"/>
<path d="M364.4,18.5 L372.4,26 M372.4,18.5 L364.4,26" stroke="#2b2a33" stroke-width="1.2"/>
<path d="M557.7,18.5 L565.7,26 M565.7,18.5 L557.7,26" stroke="#2b2a33" stroke-width="1.2"/>
<path d="M751.1,18.5 L759.1,26 M759.1,18.5 L751.1,26" stroke="#2b2a33" stroke-width="1.2"/>
<path d="M944.5,18.5 L952.5,26 M952.5,18.5 L944.5,26" stroke="#2b2a33" stroke-width="1.2"/>
<path d="M1137.8,18.5 L1145.8,26 M1145.8,18.5 L1137.8,26" stroke="#2b2a33" stroke-width="1.2"/>
<path d="M1331.2,18.5 L1339.2,26 M1339.2,18.5 L1331.2,26" stroke="#2b2a33" stroke-width="1.2"/>
<path d="M1524.6,18.5 L1532.6,26 M1532.6,18.5 L1524.6,26" stroke="#2b2a33" stroke-width="1.2"/>
<path d="M1718.0,18.5 L1726.0,26 M1726.0,18.5 L1718.0,26" stroke="#2b2a33" stroke-width="1.2"/>
<rect x="169.0" y="6" width="14" height="30" fill="#f4f4f4"/>
<rect x="149.0" y="8" width="20" height="28" fill="url(#fadeT)"/>
<path d="M171.0,18.5 L179.0,26 M179.0,18.5 L171.0,26" stroke="#2b2a33" stroke-width="1.2"/>
<rect x="362.4" y="6" width="14" height="30" fill="#f4f4f4"/>
<rect x="342.4" y="8" width="20" height="28" fill="url(#fadeT)"/>
<path d="M364.4,18.5 L372.4,26 M372.4,18.5 L364.4,26" stroke="#2b2a33" stroke-width="1.2"/>
<rect x="555.7" y="6" width="14" height="30" fill="#f4f4f4"/>
<rect x="535.7" y="8" width="20" height="28" fill="url(#fadeT)"/>
<path d="M557.7,18.5 L565.7,26 M565.7,18.5 L557.7,26" stroke="#2b2a33" stroke-width="1.2"/>
<rect x="749.1" y="8" width="12" height="28" fill="#e8e8e8"/>
<rect x="729.1" y="8" width="20" height="28" fill="url(#fadeA)"/>
<path d="M751.1,18.5 L759.1,26 M759.1,18.5 L751.1,26" stroke="#2b2a33" stroke-width="1.2"/>
<rect x="942.5" y="6" width="14" height="30" fill="#f4f4f4"/>
<rect x="922.5" y="8" width="20" height="28" fill="url(#fadeT)"/>
<path d="M944.5,18.5 L952.5,26 M952.5,18.5 L944.5,26" stroke="#2b2a33" stroke-width="1.2"/>
<rect x="1135.8" y="6" width="14" height="30" fill="#f4f4f4"/>
<rect x="1115.8" y="8" width="20" height="28" fill="url(#fadeT)"/>
<path d="M1137.8,18.5 L1145.8,26 M1145.8,18.5 L1137.8,26" stroke="#2b2a33" stroke-width="1.2"/>
<rect x="1329.2" y="6" width="14" height="30" fill="#f4f4f4"/>
<rect x="1309.2" y="8" width="20" height="28" fill="url(#fadeT)"/>
<path d="M1331.2,18.5 L1339.2,26 M1339.2,18.5 L1331.2,26" stroke="#2b2a33" stroke-width="1.2"/>
<rect x="1522.6" y="6" width="14" height="30" fill="#f4f4f4"/>
<rect x="1502.6" y="8" width="20" height="28" fill="url(#fadeT)"/>
<path d="M1524.6,18.5 L1532.6,26 M1532.6,18.5 L1524.6,26" stroke="#2b2a33" stroke-width="1.2"/>
<rect x="1716.0" y="6" width="14" height="30" fill="#f4f4f4"/>
<rect x="1696.0" y="8" width="20" height="28" fill="url(#fadeT)"/>
<path d="M1718.0,18.5 L1726.0,26 M1726.0,18.5 L1718.0,26" stroke="#2b2a33" stroke-width="1.2"/>
<path d="M1759.5,16.8 V28.6 M1753.8,22.3 H1765.4" stroke="#2b2a33" stroke-width="1.1"/>
<rect x="1830" y="24" width="8" height="1.8" fill="#2b2a33"/>
<rect x="1865.6" y="19.6" width="4.8" height="4.8" fill="none" stroke="#2b2a33" stroke-width="1.7"/>
<path d="M1897.5,18 L1905.5,26 M1905.5,18 L1897.5,26" stroke="#2b2a33" stroke-width="2"/>
</svg>
</body></html>
